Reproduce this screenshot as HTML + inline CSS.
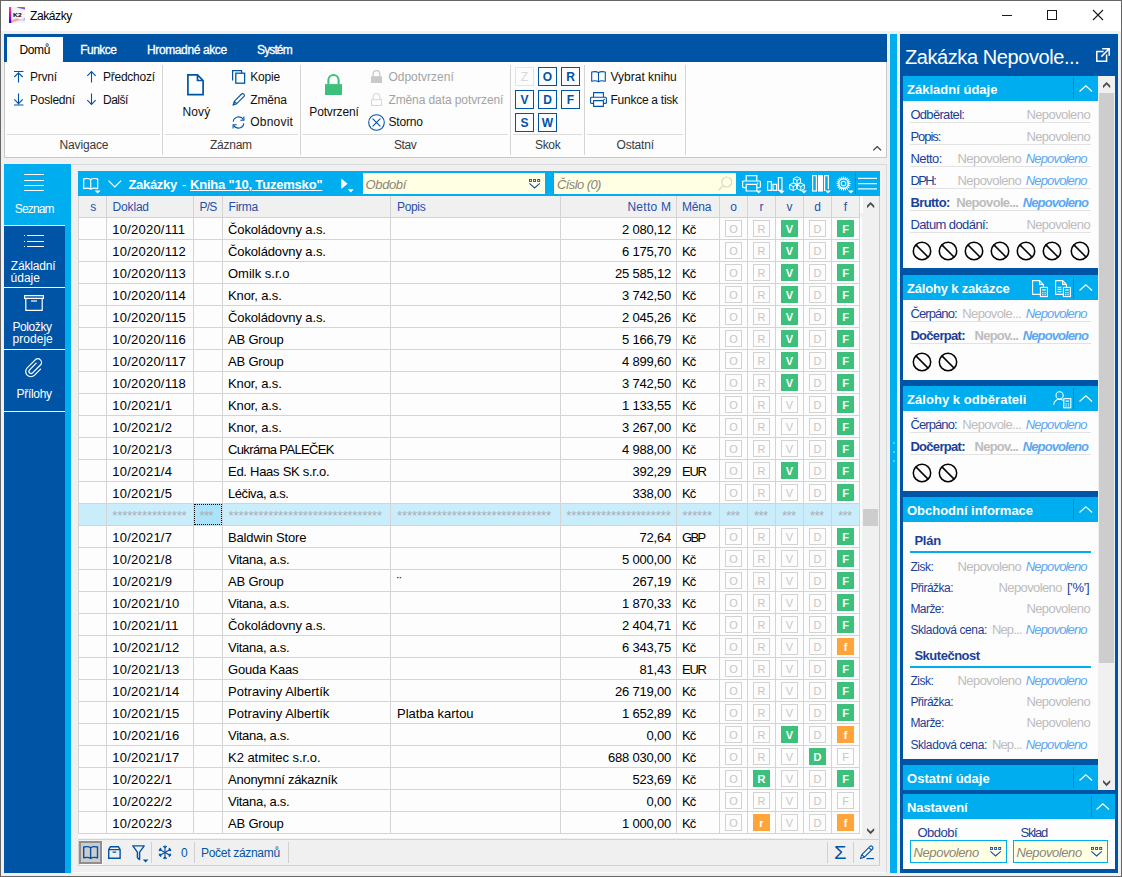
<!DOCTYPE html>
<html lang="cs"><head><meta charset="utf-8"><title>Zakázky</title>
<style>
html,body{margin:0;padding:0;}
body{width:1122px;height:877px;overflow:hidden;background:#f0f0f0;font-family:"Liberation Sans",sans-serif;font-size:12px;position:relative;}
#w{position:absolute;left:0;top:0;width:1122px;height:877px;overflow:hidden;}
#w div, #w svg, #w span.a{position:absolute;white-space:nowrap;box-sizing:border-box;}
svg{overflow:visible}
.b{font-weight:bold}
.i{font-style:italic}
</style></head><body><div id="w">
<!-- titlebar -->
<div style="left:0px;top:0px;width:1122px;height:877px;border:1px solid #666;"></div>
<div style="left:1px;top:1px;width:1120px;height:30px;background:#fff;"></div>
<svg style="left:9px;top:7px" width="16" height="16" viewBox="0 0 16 16"><defs><linearGradient id="kg" x1="0" y1="0" x2="0" y2="1"><stop offset="0" stop-color="#f2505a"/><stop offset="0.5" stop-color="#d400d0"/><stop offset="1" stop-color="#2a00e6"/></linearGradient><linearGradient id="kb" x1="0" y1="0" x2="1" y2="0"><stop offset="0" stop-color="#ff9a6a"/><stop offset="0.45" stop-color="#f986b0"/><stop offset="0.8" stop-color="#e6d0f4"/><stop offset="1" stop-color="#b58af0"/></linearGradient></defs><rect x="0" y="0" width="16" height="16" fill="#f3f3f8"/><path d="M7.5 0.2C10 -0.2 13.5 0 16 0.2V2.6C13.5 1.4 10 1.6 7.5 0.2Z" fill="#6a4af2" opacity="0.9"/><path d="M2 16V13.6C5 13 7 11 9 11.8C11 12.6 13 13.4 16 10.6V13C13 14.6 11 13.4 9 13.6C6 14 5 15.4 2 16Z" fill="url(#kb)" opacity="0.85"/><rect x="0" y="0" width="2.2" height="16" fill="url(#kg)"/><text x="8.4" y="10.3" font-size="5.6" font-weight="bold" text-anchor="middle" fill="#000" font-family="Liberation Sans, sans-serif" textLength="8.6" lengthAdjust="spacingAndGlyphs">K2</text></svg>
<div style="top:8px;font-size:12px;line-height:16px;color:#000;letter-spacing:-0.41px;left:30px;">Zakázky</div>
<div style="left:1002px;top:15px;width:10px;height:1px;background:#1a1a1a;"></div>
<div style="left:1047px;top:10px;width:10px;height:10px;border:1px solid #1a1a1a;"></div>
<svg style="left:1093px;top:10px" width="10" height="10" viewBox="0 0 10 10"><path d="M0 0L10 10M10 0L0 10" stroke="#1a1a1a" stroke-width="1.1" fill="none"/></svg>
<!-- ribbon -->
<div style="left:4px;top:34px;width:883px;height:28px;background:#0054a6;"></div>
<div style="left:7px;top:37px;width:56px;height:25px;background:#fdfdfd;"></div>
<div style="top:42px;font-size:12px;line-height:16px;color:#000;letter-spacing:-0.43px;left:19.6px;">Domů</div>
<div style="top:42px;font-size:12px;line-height:16px;color:#fff;letter-spacing:-0.51px;left:80.2px;-webkit-text-stroke:0.3px #fff;">Funkce</div>
<div style="top:42px;font-size:12px;line-height:16px;color:#fff;letter-spacing:-0.38px;left:147px;-webkit-text-stroke:0.3px #fff;">Hromadné akce</div>
<div style="top:42px;font-size:12px;line-height:16px;color:#fff;letter-spacing:-0.87px;left:257px;-webkit-text-stroke:0.3px #fff;">Systém</div>
<div style="left:4px;top:62px;width:883px;height:96px;background:#fdfdfd;border:1px solid #c9c9c9;border-top:none;"></div>
<div style="left:7px;top:134px;width:153px;height:1px;background:#dcdcdc;"></div>
<div style="left:165px;top:134px;width:133px;height:1px;background:#dcdcdc;"></div>
<div style="left:303px;top:134px;width:205px;height:1px;background:#dcdcdc;"></div>
<div style="left:513px;top:134px;width:69px;height:1px;background:#dcdcdc;"></div>
<div style="left:587px;top:134px;width:96px;height:1px;background:#dcdcdc;"></div>
<div style="left:162px;top:65px;width:1px;height:90px;background:#d4d4d4;"></div>
<div style="left:300px;top:65px;width:1px;height:90px;background:#d4d4d4;"></div>
<div style="left:510px;top:65px;width:1px;height:90px;background:#d4d4d4;"></div>
<div style="left:584px;top:65px;width:1px;height:90px;background:#d4d4d4;"></div>
<div style="left:685px;top:65px;width:1px;height:90px;background:#d4d4d4;"></div>
<div style="top:137px;font-size:12px;line-height:16px;color:#3a3a3a;letter-spacing:-0.15px;left:59.5px;">Navigace</div>
<div style="top:137px;font-size:12px;line-height:16px;color:#3a3a3a;letter-spacing:-0.26px;left:210px;">Záznam</div>
<div style="top:137px;font-size:12px;line-height:16px;color:#3a3a3a;letter-spacing:-0.42px;left:394px;">Stav</div>
<div style="top:137px;font-size:12px;line-height:16px;color:#3a3a3a;letter-spacing:-0.34px;left:535px;">Skok</div>
<div style="top:137px;font-size:12px;line-height:16px;color:#3a3a3a;letter-spacing:-0.19px;left:616.5px;">Ostatní</div>
<div style="top:69px;font-size:12px;line-height:16px;color:#111;letter-spacing:-0.24px;left:30px;">První</div>
<div style="top:92px;font-size:12px;line-height:16px;color:#111;letter-spacing:-0.24px;left:30px;">Poslední</div>
<div style="top:69px;font-size:12px;line-height:16px;color:#111;letter-spacing:-0.25px;left:103px;">Předchozí</div>
<div style="top:92px;font-size:12px;line-height:16px;color:#111;letter-spacing:-0.51px;left:103px;">Další</div>
<svg style="left:14px;top:70px" width="10" height="13" viewBox="0 0 10 13"><path d="M0 1.5H9.4M4.5 2.4V12.6M0.3 7L4.5 2.8L8.7 7" stroke="#0054a6" stroke-width="1.1" fill="none"/></svg>
<svg style="left:14px;top:93px" width="10" height="13" viewBox="0 0 10 13"><path d="M0 12H9.4M4.5 0.4V10.8M0.3 6.4L4.5 10.6L8.7 6.4" stroke="#0054a6" stroke-width="1.1" fill="none"/></svg>
<svg style="left:87px;top:70px" width="10" height="13" viewBox="0 0 10 13"><path d="M4.5 1.4V12.6M0.3 5.8L4.5 1.6L8.7 5.8" stroke="#0054a6" stroke-width="1.1" fill="none"/></svg>
<svg style="left:87px;top:93px" width="10" height="13" viewBox="0 0 10 13"><path d="M4.5 0.4V11.4M0.3 7.2L4.5 11.4L8.7 7.2" stroke="#0054a6" stroke-width="1.1" fill="none"/></svg>
<svg style="left:187px;top:74px" width="17" height="22" viewBox="0 0 17 22"><path d="M0.9 0.9H10.5L16.1 6.5V20.6H0.9Z M10.5 0.9V6.5H16.1" stroke="#0054a6" stroke-width="1.7" fill="none" stroke-linejoin="miter"/></svg>
<div style="top:104px;font-size:12px;line-height:16px;color:#111;letter-spacing:0.11px;left:182.5px;">Nový</div>
<div style="top:69px;font-size:12px;line-height:16px;color:#111;letter-spacing:-0.18px;left:250.3px;">Kopie</div>
<div style="top:92px;font-size:12px;line-height:16px;color:#111;letter-spacing:-0.21px;left:250.3px;">Změna</div>
<div style="top:114px;font-size:12px;line-height:16px;color:#111;letter-spacing:0.21px;left:250.3px;">Obnovit</div>
<svg style="left:232px;top:70px" width="13" height="14" viewBox="0 0 13 14"><path d="M0.6 10.4V0.6H9.6V3" stroke="#0054a6" stroke-width="1.2" fill="none"/><rect x="3.8" y="3.2" width="8.8" height="10" stroke="#0054a6" stroke-width="1.3" fill="none"/></svg>
<svg style="left:232px;top:93px" width="13" height="13" viewBox="0 0 13 13"><path d="M1.2 12L2.3 8.3L9.6 1A1.4 1.4 0 0 1 11.6 1L12 1.4A1.4 1.4 0 0 1 12 3.4L4.7 10.7Z M2.3 8.3L4.7 10.7" stroke="#0054a6" stroke-width="1.1" fill="none" stroke-linejoin="round"/><path d="M0.6 12.4L1.6 9.4L3.6 11.4Z" fill="#0054a6"/></svg>
<svg style="left:232px;top:116px" width="13" height="13" viewBox="0 0 13 13"><path d="M1.2 5.6A5.5 5.5 0 0 1 11.4 3.6M11.8 7.4A5.5 5.5 0 0 1 1.6 9.4" stroke="#0054a6" stroke-width="1.1" fill="none"/><path d="M11.9 0.6V4.2H8.3M1.1 12.4V8.8H4.7" stroke="#0054a6" stroke-width="1.1" fill="none"/></svg>
<svg style="left:325px;top:74px" width="17" height="21" viewBox="0 0 17 21"><path d="M3.4000000000000004 10.6V6.1A5.1 5.1 0 0 1 13.6 6.1V10.6" fill="none" stroke="#3dc07b" stroke-width="2"/><rect x="0" y="10.1" width="17" height="10.9" fill="#3dc07b"/></svg>
<div style="top:104px;font-size:12px;line-height:16px;color:#111;letter-spacing:-0.15px;left:309.3px;">Potvrzení</div>
<svg style="left:371px;top:70px" width="11" height="13" viewBox="0 0 11 13"><path d="M2.2 6.7V3.9499999999999997A3.3 3.3 0 0 1 8.8 3.9499999999999997V6.7" fill="none" stroke="#c9c9c9" stroke-width="1.3"/><rect x="0" y="6.2" width="11" height="6.8" fill="#c9c9c9"/></svg>
<svg style="left:371px;top:93px" width="11" height="13" viewBox="0 0 11 13"><path d="M2.2 6.7V3.8499999999999996A3.3 3.3 0 0 1 8.8 3.8499999999999996V6.7" fill="none" stroke="#d6d6d6" stroke-width="1.1"/><rect x="0.5" y="6.7" width="10" height="5.8" fill="none" stroke="#d6d6d6" stroke-width="1"/></svg>
<div style="top:69px;font-size:12px;line-height:16px;color:#a3a3a3;left:388.4px;">Odpotvrzení</div>
<div style="top:92px;font-size:12px;line-height:16px;color:#a3a3a3;letter-spacing:-0.09px;left:388.4px;">Změna data potvrzení</div>
<svg style="left:368px;top:114px" width="17" height="17" viewBox="0 0 17 17"><circle cx="8.5" cy="8.5" r="7.8" stroke="#0054a6" stroke-width="1.1" fill="none"/><path d="M4.6 4.6L12.4 12.4M12.4 4.6L4.6 12.4" stroke="#0054a6" stroke-width="1.1" fill="none"/></svg>
<div style="top:114px;font-size:12px;line-height:16px;color:#111;letter-spacing:-0.17px;left:388.4px;">Storno</div>
<div style="left:515px;top:67px;width:19px;height:19px;border:1px solid #e4e4e4;color:#d9d9d9;font-weight:normal;font-size:12px;line-height:18px;text-align:center;">Z</div>
<div style="left:538px;top:67px;width:19px;height:19px;border:1px solid #0054a6;color:#0054a6;font-weight:bold;font-size:12px;line-height:18px;text-align:center;">O</div>
<div style="left:561px;top:67px;width:19px;height:19px;border:1px solid #0054a6;color:#0054a6;font-weight:bold;font-size:12px;line-height:18px;text-align:center;">R</div>
<div style="left:515px;top:90px;width:19px;height:19px;border:1px solid #0054a6;color:#0054a6;font-weight:bold;font-size:12px;line-height:18px;text-align:center;">V</div>
<div style="left:538px;top:90px;width:19px;height:19px;border:1px solid #0054a6;color:#0054a6;font-weight:bold;font-size:12px;line-height:18px;text-align:center;">D</div>
<div style="left:561px;top:90px;width:19px;height:19px;border:1px solid #0054a6;color:#0054a6;font-weight:bold;font-size:12px;line-height:18px;text-align:center;">F</div>
<div style="left:515px;top:113px;width:19px;height:19px;border:1px solid #0054a6;color:#0054a6;font-weight:bold;font-size:12px;line-height:18px;text-align:center;">S</div>
<div style="left:538px;top:113px;width:19px;height:19px;border:1px solid #0054a6;color:#0054a6;font-weight:bold;font-size:12px;line-height:18px;text-align:center;">W</div>
<svg style="left:591px;top:71px" width="15" height="12" viewBox="0 0 15 12"><path d="M7.5 1.6V10.4M7.5 1.6C6.3 0.7 3 0.5 0.7 1V10.2C3 9.7 6.3 9.9 7.5 10.8C8.7 9.9 12 9.7 14.3 10.2V1C12 0.5 8.7 0.7 7.5 1.6Z" stroke="#0054a6" stroke-width="1.1" fill="none" stroke-linejoin="round"/></svg>
<div style="top:69px;font-size:12px;line-height:16px;color:#111;left:610.5px;">Vybrat knihu</div>
<svg style="left:590px;top:92px" width="17" height="15" viewBox="0 0 17 15"><path d="M3.6 5.2V0.6H13.4V5.2M3.6 11.4H1.6A1 1 0 0 1 0.6 10.4V6.2A1 1 0 0 1 1.6 5.2H15.4A1 1 0 0 1 16.4 6.2V10.4A1 1 0 0 1 15.4 11.4H13.4M3.6 8.6H13.4V14.4H3.6Z" stroke="#0054a6" stroke-width="1.1" fill="none"/><rect x="13.6" y="6.8" width="1.2" height="1.2" fill="#0054a6"/></svg>
<div style="top:92px;font-size:12px;line-height:16px;color:#111;letter-spacing:-0.26px;left:610.5px;">Funkce a tisk</div>
<svg style="left:873px;top:146px" width="9" height="5" viewBox="0 0 9 5"><path d="M0.3 4.4L4.2 0.6L8.1 4.4" stroke="#333" stroke-width="1.1" fill="none"/></svg>
<!-- sidebar -->
<div style="left:4px;top:164px;width:67px;height:709px;background:#00adef;"></div>
<div style="left:4px;top:226px;width:61px;height:647px;background:#0054a6;"></div>
<div style="left:4px;top:225px;width:61px;height:1px;background:#fff;"></div>
<div style="left:4px;top:287px;width:61px;height:1px;background:#fff;"></div>
<div style="left:4px;top:349px;width:61px;height:1px;background:#fff;"></div>
<div style="left:4px;top:411px;width:61px;height:1px;background:#fff;"></div>
<div style="left:24px;top:174px;width:20px;height:1px;background:#fff;"></div>
<div style="left:24px;top:180px;width:20px;height:1px;background:#fff;"></div>
<div style="left:24px;top:185px;width:20px;height:1px;background:#fff;"></div>
<div style="left:24px;top:190px;width:20px;height:1px;background:#fff;"></div>
<div style="top:200.5px;font-size:12px;line-height:16px;color:#fff;letter-spacing:-0.85px;left:14.8px;">Seznam</div>
<div style="left:24px;top:235px;width:1px;height:1px;background:#fff;"></div>
<div style="left:27px;top:235px;width:17px;height:1px;background:#fff;"></div>
<div style="left:24px;top:241px;width:1px;height:1px;background:#fff;"></div>
<div style="left:27px;top:241px;width:17px;height:1px;background:#fff;"></div>
<div style="left:24px;top:246px;width:1px;height:1px;background:#fff;"></div>
<div style="left:27px;top:246px;width:17px;height:1px;background:#fff;"></div>
<div style="top:257.5px;font-size:12px;line-height:16px;color:#fff;letter-spacing:-0.19px;left:10.8px;">Základní</div>
<div style="top:269.5px;font-size:12px;line-height:16px;color:#fff;letter-spacing:-0.01px;left:10.6px;">údaje</div>
<svg style="left:24px;top:295px" width="20" height="16" viewBox="0 0 20 16"><path d="M0.6 0.6H19.4V3.4H0.6Z M1.8 3.4V15.4H18.2V3.4" stroke="#fff" fill="none" stroke-width="1.2"/><rect x="7" y="5.4" width="6" height="1.2" fill="#fff"/></svg>
<div style="top:319px;font-size:12px;line-height:16px;color:#fff;letter-spacing:-0.39px;left:12.4px;">Položky</div>
<div style="top:331px;font-size:12px;line-height:16px;color:#fff;letter-spacing:0.02px;left:12.6px;">prodeje</div>
<svg style="left:25px;top:358px" width="18" height="20" viewBox="0 0 18 20"><path d="M11.2 5.2L4.6 11.8A2 2 0 0 0 7.6 14.8L15.4 7A3.6 3.6 0 0 0 10.2 1.8L2.2 9.8A5.2 5.2 0 0 0 9.6 17.2L15.6 11.2" stroke="#fff" fill="none" stroke-width="1.2" stroke-linecap="round"/></svg>
<div style="top:386.3px;font-size:12px;line-height:16px;color:#fff;letter-spacing:-0.32px;left:16.6px;">Přílohy</div>
<!-- table -->
<div style="left:71px;top:164px;width:816px;height:709px;border:1px solid #dadada;border-left-color:#fbf6f2;border-bottom-color:#fafafa;"></div>
<div style="left:879px;top:196px;width:1px;height:670px;background:#cbcbcb;"></div>
<div style="left:78px;top:171px;width:802px;height:25px;background:#00adef;"></div>
<svg style="left:83px;top:178px" width="18" height="16" viewBox="0 0 18 16"><path d="M7.7 1.5V11M7.7 1.5C6.4 0.6 3 0.4 0.7 0.9V10.6C3 10.1 6.4 10.3 7.7 11.2C9 10.3 12.4 10.1 14.7 10.6V0.9C12.4 0.4 9 0.6 7.7 1.5Z" stroke="#fff" fill="none" stroke-width="1.2" stroke-linejoin="round"/><path d="M11.6 12.6H17.6L14.6 15.6Z" fill="#fff"/></svg>
<svg style="left:108px;top:180px" width="14" height="8" viewBox="0 0 14 8"><path d="M0.5 0.6L6.8 6.9L13.1 0.6" stroke="#fff" fill="none" stroke-width="1.2"/></svg>
<div style="top:175.5px;font-size:13px;line-height:17px;color:#fff;letter-spacing:-0.33px;font-weight:bold;left:128.5px;">Zakázky</div>
<div style="top:175.5px;font-size:13px;line-height:17px;color:#fff;font-weight:bold;left:182px;font-weight:normal;">-</div>
<div style="top:175.5px;font-size:13px;line-height:17px;color:#fff;letter-spacing:-0.2px;font-weight:bold;left:190px;text-decoration:underline;text-underline-offset:1px;">Kniha "10, Tuzemsko"</div>
<svg style="left:341px;top:178px" width="13" height="15" viewBox="0 0 13 15"><path d="M0.3 0.6L6.6 5.8L0.3 11Z" fill="#fff"/><path d="M6.8 11.2H12.8L9.8 14.4Z" fill="#fff"/></svg>
<div style="left:363px;top:173px;width:182px;height:21px;background:#ffffe4;"></div>
<div style="top:175.8px;font-size:13px;line-height:17px;color:#8c8478;letter-spacing:-0.39px;font-style:italic;left:365.6px;">Období</div>
<svg style="left:529px;top:179px" width="12" height="10" viewBox="0 0 12 10"><rect x="0.5" y="0.5" width="2" height="2" fill="none" stroke="#1c4aa0" stroke-width="0.9"/><rect x="4.6" y="0.5" width="2" height="2" fill="none" stroke="#1c4aa0" stroke-width="0.9"/><rect x="8.7" y="0.5" width="2" height="2" fill="none" stroke="#1c4aa0" stroke-width="0.9"/><path d="M0.4 4.4L5.6 9L10.8 4.4" stroke="#1c4aa0" stroke-width="1.1" fill="none"/></svg>
<div style="left:554px;top:173px;width:182px;height:21px;background:#ffffe4;"></div>
<div style="top:175.8px;font-size:13px;line-height:17px;color:#8c8478;letter-spacing:-0.59px;font-style:italic;left:557px;">Číslo (0)</div>
<svg style="left:718px;top:176px" width="15" height="15" viewBox="0 0 15 15"><circle cx="8.8" cy="6" r="5" stroke="#d9d9c4" stroke-width="1.2" fill="none"/><path d="M5.2 9.6L0.8 14" stroke="#d9d9c4" stroke-width="1.2"/></svg>
<svg style="left:742px;top:175px" width="20" height="18" viewBox="0 0 20 18"><path d="M4.2 6V0.6H14.8V6M4.2 12.6H1.6A1 1 0 0 1 0.6 11.6V7A1 1 0 0 1 1.6 6H17.4A1 1 0 0 1 18.4 7V11.6A1 1 0 0 1 17.4 12.6H14.8M4.2 9.4H14.8V16H4.2Z" stroke="#fff" fill="none" stroke-width="1.2"/><rect x="15" y="7.6" width="1.2" height="1.2" fill="#fff"/><path d="M13.6 15.4H19.6L16.6 18.4Z" fill="#fff"/></svg>
<svg style="left:767px;top:176px" width="18" height="17" viewBox="0 0 18 17"><path d="M0.6 5.6H4.4V14.4H0.6ZM6 8.4H9.6V14.4H6ZM11.4 1.6H15V14.4H11.4Z" stroke="#fff" fill="none" stroke-width="1.2"/><path d="M11.6 14.8H17.6L14.6 17.8Z" fill="#fff"/></svg>
<svg style="left:789px;top:176px" width="18" height="17" viewBox="0 0 18 17"><path d="M8 0.8L11.6 2.6V6.6L8 8.4L4.4 6.6V2.6ZM4.4 2.6L8 4.4L11.6 2.6M8 4.4V8.4M4.2 7L7.8 8.8V12.8L4.2 14.6L0.6 12.8V8.8ZM0.6 8.8L4.2 10.6L7.8 8.8M4.2 10.6V14.6M11.8 7L15.4 8.8V12.8L11.8 14.6L8.2 12.8V8.8ZM8.2 8.8L11.8 10.6L15.4 8.8M11.8 10.6V14.6" stroke="#fff" fill="none" stroke-width="1"/><path d="M12 14.6H18L15 17.6Z" fill="#fff"/></svg>
<svg style="left:812px;top:175px" width="19" height="18" viewBox="0 0 19 18"><rect x="0.6" y="0.6" width="3.8" height="15.4" stroke="#fff" fill="none" stroke-width="1.2"/><rect x="6" y="0" width="5" height="16.6" fill="#fff"/><path d="M12.6 16V0.6H16.4V14" stroke="#fff" fill="none" stroke-width="1.2"/><path d="M13 15.6H19L16 18.6Z" fill="#fff"/></svg>
<svg style="left:836px;top:176px" width="18" height="18" viewBox="0 0 18 18"><circle cx="7.5" cy="7.6" r="4.7" stroke="#fff" fill="none" stroke-width="1.4"/><circle cx="7.5" cy="7.6" r="2.3" stroke="#fff" fill="none" stroke-width="1.1"/><path d="M7.5 0.5V2.8" stroke="#fff" stroke-width="1" transform="rotate(0 7.5 7.6)"/><path d="M7.5 0.5V2.8" stroke="#fff" stroke-width="1" transform="rotate(18 7.5 7.6)"/><path d="M7.5 0.5V2.8" stroke="#fff" stroke-width="1" transform="rotate(36 7.5 7.6)"/><path d="M7.5 0.5V2.8" stroke="#fff" stroke-width="1" transform="rotate(54 7.5 7.6)"/><path d="M7.5 0.5V2.8" stroke="#fff" stroke-width="1" transform="rotate(72 7.5 7.6)"/><path d="M7.5 0.5V2.8" stroke="#fff" stroke-width="1" transform="rotate(90 7.5 7.6)"/><path d="M7.5 0.5V2.8" stroke="#fff" stroke-width="1" transform="rotate(108 7.5 7.6)"/><path d="M7.5 0.5V2.8" stroke="#fff" stroke-width="1" transform="rotate(126 7.5 7.6)"/><path d="M7.5 0.5V2.8" stroke="#fff" stroke-width="1" transform="rotate(144 7.5 7.6)"/><path d="M7.5 0.5V2.8" stroke="#fff" stroke-width="1" transform="rotate(162 7.5 7.6)"/><path d="M7.5 0.5V2.8" stroke="#fff" stroke-width="1" transform="rotate(180 7.5 7.6)"/><path d="M7.5 0.5V2.8" stroke="#fff" stroke-width="1" transform="rotate(198 7.5 7.6)"/><path d="M7.5 0.5V2.8" stroke="#fff" stroke-width="1" transform="rotate(216 7.5 7.6)"/><path d="M7.5 0.5V2.8" stroke="#fff" stroke-width="1" transform="rotate(234 7.5 7.6)"/><path d="M7.5 0.5V2.8" stroke="#fff" stroke-width="1" transform="rotate(252 7.5 7.6)"/><path d="M7.5 0.5V2.8" stroke="#fff" stroke-width="1" transform="rotate(270 7.5 7.6)"/><path d="M7.5 0.5V2.8" stroke="#fff" stroke-width="1" transform="rotate(288 7.5 7.6)"/><path d="M7.5 0.5V2.8" stroke="#fff" stroke-width="1" transform="rotate(306 7.5 7.6)"/><path d="M7.5 0.5V2.8" stroke="#fff" stroke-width="1" transform="rotate(324 7.5 7.6)"/><path d="M7.5 0.5V2.8" stroke="#fff" stroke-width="1" transform="rotate(342 7.5 7.6)"/><path d="M11.8 14.6H17.8L14.8 17.6Z" fill="#fff"/></svg>
<div style="left:855px;top:173px;width:1px;height:21px;background:#0088cf;"></div>
<svg style="left:858px;top:176px" width="19" height="15" viewBox="0 0 19 15"><path d="M0 2.4H19M0 7.6H19M0 12.9H19" stroke="#fff" stroke-width="1.25" opacity="0.92"/></svg>
<div style="left:78px;top:196px;width:782px;height:21px;background:#f0f0f0;"></div>
<div style="left:78px;top:217px;width:785px;height:621px;background:#fdfdfd;"></div>
<div style="left:862px;top:196px;width:17px;height:642px;background:#f0f0f0;"></div>
<div style="left:860px;top:196px;width:3px;height:17px;background:#fdfdfd;"></div>
<div style="left:78px;top:504px;width:782px;height:21px;background:#c9edfb;"></div>
<div style="left:194px;top:504px;width:28px;height:21px;background:#abe3fa;border:1px dotted #000;"></div>
<div style="left:78px;top:217px;width:782px;height:1px;background:#d4d4d4;"></div>
<div style="left:78px;top:239px;width:782px;height:1px;background:#d4d4d4;"></div>
<div style="left:78px;top:261px;width:782px;height:1px;background:#d4d4d4;"></div>
<div style="left:78px;top:283px;width:782px;height:1px;background:#d4d4d4;"></div>
<div style="left:78px;top:305px;width:782px;height:1px;background:#d4d4d4;"></div>
<div style="left:78px;top:327px;width:782px;height:1px;background:#d4d4d4;"></div>
<div style="left:78px;top:349px;width:782px;height:1px;background:#d4d4d4;"></div>
<div style="left:78px;top:371px;width:782px;height:1px;background:#d4d4d4;"></div>
<div style="left:78px;top:393px;width:782px;height:1px;background:#d4d4d4;"></div>
<div style="left:78px;top:415px;width:782px;height:1px;background:#d4d4d4;"></div>
<div style="left:78px;top:437px;width:782px;height:1px;background:#d4d4d4;"></div>
<div style="left:78px;top:459px;width:782px;height:1px;background:#d4d4d4;"></div>
<div style="left:78px;top:481px;width:782px;height:1px;background:#d4d4d4;"></div>
<div style="left:78px;top:503px;width:782px;height:1px;background:#d4d4d4;"></div>
<div style="left:78px;top:525px;width:782px;height:1px;background:#d4d4d4;"></div>
<div style="left:78px;top:547px;width:782px;height:1px;background:#d4d4d4;"></div>
<div style="left:78px;top:569px;width:782px;height:1px;background:#d4d4d4;"></div>
<div style="left:78px;top:591px;width:782px;height:1px;background:#d4d4d4;"></div>
<div style="left:78px;top:613px;width:782px;height:1px;background:#d4d4d4;"></div>
<div style="left:78px;top:635px;width:782px;height:1px;background:#d4d4d4;"></div>
<div style="left:78px;top:657px;width:782px;height:1px;background:#d4d4d4;"></div>
<div style="left:78px;top:679px;width:782px;height:1px;background:#d4d4d4;"></div>
<div style="left:78px;top:701px;width:782px;height:1px;background:#d4d4d4;"></div>
<div style="left:78px;top:723px;width:782px;height:1px;background:#d4d4d4;"></div>
<div style="left:78px;top:745px;width:782px;height:1px;background:#d4d4d4;"></div>
<div style="left:78px;top:767px;width:782px;height:1px;background:#d4d4d4;"></div>
<div style="left:78px;top:789px;width:782px;height:1px;background:#d4d4d4;"></div>
<div style="left:78px;top:811px;width:782px;height:1px;background:#d4d4d4;"></div>
<div style="left:78px;top:833px;width:782px;height:1px;background:#d4d4d4;"></div>
<div style="left:78px;top:196px;width:1px;height:638px;background:#d4d4d4;"></div>
<div style="left:106px;top:196px;width:1px;height:638px;background:#d4d4d4;"></div>
<div style="left:193px;top:196px;width:1px;height:638px;background:#d4d4d4;"></div>
<div style="left:222px;top:196px;width:1px;height:638px;background:#d4d4d4;"></div>
<div style="left:390px;top:196px;width:1px;height:638px;background:#d4d4d4;"></div>
<div style="left:560px;top:196px;width:1px;height:638px;background:#d4d4d4;"></div>
<div style="left:676px;top:196px;width:1px;height:638px;background:#d4d4d4;"></div>
<div style="left:719px;top:196px;width:1px;height:638px;background:#d4d4d4;"></div>
<div style="left:747px;top:196px;width:1px;height:638px;background:#d4d4d4;"></div>
<div style="left:775px;top:196px;width:1px;height:638px;background:#d4d4d4;"></div>
<div style="left:803px;top:196px;width:1px;height:638px;background:#d4d4d4;"></div>
<div style="left:831px;top:196px;width:1px;height:638px;background:#d4d4d4;"></div>
<div style="left:859px;top:196px;width:1px;height:638px;background:#d4d4d4;"></div>
<div style="top:199px;font-size:12px;line-height:16px;color:#2450ac;left:90.3px;">s</div>
<div style="top:199px;font-size:12px;line-height:16px;color:#2450ac;letter-spacing:-0.18px;left:112.6px;">Doklad</div>
<div style="top:199px;font-size:12px;line-height:16px;color:#2450ac;letter-spacing:-0.81px;left:199.6px;">P/S</div>
<div style="top:199px;font-size:12px;line-height:16px;color:#2450ac;letter-spacing:-0.27px;left:228.6px;">Firma</div>
<div style="top:199px;font-size:12px;line-height:16px;color:#2450ac;letter-spacing:-0.34px;left:397px;">Popis</div>
<div style="top:199px;font-size:12px;line-height:16px;color:#2450ac;letter-spacing:0.26px;right:450.74px;">Netto M</div>
<div style="top:199px;font-size:12px;line-height:16px;color:#2450ac;letter-spacing:-0.18px;left:682px;">Měna</div>
<div style="top:199px;font-size:12px;line-height:16px;color:#2450ac;left:730.2px;">o</div>
<div style="top:199px;font-size:12px;line-height:16px;color:#2450ac;left:759.5px;">r</div>
<div style="top:199px;font-size:12px;line-height:16px;color:#2450ac;left:786.5px;">v</div>
<div style="top:199px;font-size:12px;line-height:16px;color:#2450ac;left:814.2px;">d</div>
<div style="top:199px;font-size:12px;line-height:16px;color:#2450ac;left:843.8px;">f</div>
<svg style="left:867px;top:202px" width="8" height="6" viewBox="0 0 8 6"><path d="M3.6 0L7.2 3.6V6.2L3.6 2.6L0 6.2V3.6Z" fill="#4d4d4d"/></svg>
<svg style="left:867px;top:828px" width="8" height="6" viewBox="0 0 8 6"><path d="M3.6 6.2L7.2 2.6V0L3.6 3.6L0 0V2.6Z" fill="#4d4d4d"/></svg>
<div style="left:863px;top:509px;width:15px;height:17px;background:#cdcdcd;"></div>
<div style="top:221px;font-size:13px;line-height:17px;color:#000;left:112.3px;letter-spacing:0.22px;">10/2020/111</div>
<div style="top:221px;font-size:13px;line-height:17px;color:#000;letter-spacing:-0.12px;left:228px;">Čokoládovny a.s.</div>
<div style="top:221px;font-size:13px;line-height:17px;color:#000;right:451px;letter-spacing:-0.2px;">2 080,12</div>
<div style="top:221px;font-size:13px;line-height:17px;color:#000;letter-spacing:-1.04px;left:682px;">Kč</div>
<div style="left:725px;top:220px;width:17px;height:17px;border:1px solid #d2d2d2;color:#c6c6c6;font-size:11px;line-height:17px;text-align:center;">O</div>
<div style="left:753px;top:220px;width:17px;height:17px;border:1px solid #d2d2d2;color:#c6c6c6;font-size:11px;line-height:17px;text-align:center;">R</div>
<div style="left:781px;top:220px;width:17px;height:17px;background:#3dc07b;color:#fff;font-weight:bold;font-size:11px;line-height:18px;text-align:center;">V</div>
<div style="left:809px;top:220px;width:17px;height:17px;border:1px solid #d2d2d2;color:#c6c6c6;font-size:11px;line-height:17px;text-align:center;">D</div>
<div style="left:837px;top:220px;width:17px;height:17px;background:#3dc07b;color:#fff;font-weight:bold;font-size:11px;line-height:18px;text-align:center;">F</div>
<div style="top:243px;font-size:13px;line-height:17px;color:#000;left:112.3px;letter-spacing:0.22px;">10/2020/112</div>
<div style="top:243px;font-size:13px;line-height:17px;color:#000;letter-spacing:-0.12px;left:228px;">Čokoládovny a.s.</div>
<div style="top:243px;font-size:13px;line-height:17px;color:#000;right:451px;letter-spacing:-0.2px;">6 175,70</div>
<div style="top:243px;font-size:13px;line-height:17px;color:#000;letter-spacing:-1.04px;left:682px;">Kč</div>
<div style="left:725px;top:242px;width:17px;height:17px;border:1px solid #d2d2d2;color:#c6c6c6;font-size:11px;line-height:17px;text-align:center;">O</div>
<div style="left:753px;top:242px;width:17px;height:17px;border:1px solid #d2d2d2;color:#c6c6c6;font-size:11px;line-height:17px;text-align:center;">R</div>
<div style="left:781px;top:242px;width:17px;height:17px;background:#3dc07b;color:#fff;font-weight:bold;font-size:11px;line-height:18px;text-align:center;">V</div>
<div style="left:809px;top:242px;width:17px;height:17px;border:1px solid #d2d2d2;color:#c6c6c6;font-size:11px;line-height:17px;text-align:center;">D</div>
<div style="left:837px;top:242px;width:17px;height:17px;background:#3dc07b;color:#fff;font-weight:bold;font-size:11px;line-height:18px;text-align:center;">F</div>
<div style="top:265px;font-size:13px;line-height:17px;color:#000;left:112.3px;letter-spacing:0.22px;">10/2020/113</div>
<div style="top:265px;font-size:13px;line-height:17px;color:#000;left:228px;">Omilk s.r.o</div>
<div style="top:265px;font-size:13px;line-height:17px;color:#000;right:451px;letter-spacing:-0.2px;">25 585,12</div>
<div style="top:265px;font-size:13px;line-height:17px;color:#000;letter-spacing:-1.04px;left:682px;">Kč</div>
<div style="left:725px;top:264px;width:17px;height:17px;border:1px solid #d2d2d2;color:#c6c6c6;font-size:11px;line-height:17px;text-align:center;">O</div>
<div style="left:753px;top:264px;width:17px;height:17px;border:1px solid #d2d2d2;color:#c6c6c6;font-size:11px;line-height:17px;text-align:center;">R</div>
<div style="left:781px;top:264px;width:17px;height:17px;background:#3dc07b;color:#fff;font-weight:bold;font-size:11px;line-height:18px;text-align:center;">V</div>
<div style="left:809px;top:264px;width:17px;height:17px;border:1px solid #d2d2d2;color:#c6c6c6;font-size:11px;line-height:17px;text-align:center;">D</div>
<div style="left:837px;top:264px;width:17px;height:17px;background:#3dc07b;color:#fff;font-weight:bold;font-size:11px;line-height:18px;text-align:center;">F</div>
<div style="top:287px;font-size:13px;line-height:17px;color:#000;left:112.3px;letter-spacing:0.22px;">10/2020/114</div>
<div style="top:287px;font-size:13px;line-height:17px;color:#000;letter-spacing:-0.12px;left:228px;">Knor, a.s.</div>
<div style="top:287px;font-size:13px;line-height:17px;color:#000;right:451px;letter-spacing:-0.2px;">3 742,50</div>
<div style="top:287px;font-size:13px;line-height:17px;color:#000;letter-spacing:-1.04px;left:682px;">Kč</div>
<div style="left:725px;top:286px;width:17px;height:17px;border:1px solid #d2d2d2;color:#c6c6c6;font-size:11px;line-height:17px;text-align:center;">O</div>
<div style="left:753px;top:286px;width:17px;height:17px;border:1px solid #d2d2d2;color:#c6c6c6;font-size:11px;line-height:17px;text-align:center;">R</div>
<div style="left:781px;top:286px;width:17px;height:17px;background:#3dc07b;color:#fff;font-weight:bold;font-size:11px;line-height:18px;text-align:center;">V</div>
<div style="left:809px;top:286px;width:17px;height:17px;border:1px solid #d2d2d2;color:#c6c6c6;font-size:11px;line-height:17px;text-align:center;">D</div>
<div style="left:837px;top:286px;width:17px;height:17px;background:#3dc07b;color:#fff;font-weight:bold;font-size:11px;line-height:18px;text-align:center;">F</div>
<div style="top:309px;font-size:13px;line-height:17px;color:#000;left:112.3px;letter-spacing:0.22px;">10/2020/115</div>
<div style="top:309px;font-size:13px;line-height:17px;color:#000;letter-spacing:-0.12px;left:228px;">Čokoládovny a.s.</div>
<div style="top:309px;font-size:13px;line-height:17px;color:#000;right:451px;letter-spacing:-0.2px;">2 045,26</div>
<div style="top:309px;font-size:13px;line-height:17px;color:#000;letter-spacing:-1.04px;left:682px;">Kč</div>
<div style="left:725px;top:308px;width:17px;height:17px;border:1px solid #d2d2d2;color:#c6c6c6;font-size:11px;line-height:17px;text-align:center;">O</div>
<div style="left:753px;top:308px;width:17px;height:17px;border:1px solid #d2d2d2;color:#c6c6c6;font-size:11px;line-height:17px;text-align:center;">R</div>
<div style="left:781px;top:308px;width:17px;height:17px;background:#3dc07b;color:#fff;font-weight:bold;font-size:11px;line-height:18px;text-align:center;">V</div>
<div style="left:809px;top:308px;width:17px;height:17px;border:1px solid #d2d2d2;color:#c6c6c6;font-size:11px;line-height:17px;text-align:center;">D</div>
<div style="left:837px;top:308px;width:17px;height:17px;background:#3dc07b;color:#fff;font-weight:bold;font-size:11px;line-height:18px;text-align:center;">F</div>
<div style="top:331px;font-size:13px;line-height:17px;color:#000;left:112.3px;letter-spacing:0.22px;">10/2020/116</div>
<div style="top:331px;font-size:13px;line-height:17px;color:#000;letter-spacing:-0.19px;left:228px;">AB Group</div>
<div style="top:331px;font-size:13px;line-height:17px;color:#000;right:451px;letter-spacing:-0.2px;">5 166,79</div>
<div style="top:331px;font-size:13px;line-height:17px;color:#000;letter-spacing:-1.04px;left:682px;">Kč</div>
<div style="left:725px;top:330px;width:17px;height:17px;border:1px solid #d2d2d2;color:#c6c6c6;font-size:11px;line-height:17px;text-align:center;">O</div>
<div style="left:753px;top:330px;width:17px;height:17px;border:1px solid #d2d2d2;color:#c6c6c6;font-size:11px;line-height:17px;text-align:center;">R</div>
<div style="left:781px;top:330px;width:17px;height:17px;background:#3dc07b;color:#fff;font-weight:bold;font-size:11px;line-height:18px;text-align:center;">V</div>
<div style="left:809px;top:330px;width:17px;height:17px;border:1px solid #d2d2d2;color:#c6c6c6;font-size:11px;line-height:17px;text-align:center;">D</div>
<div style="left:837px;top:330px;width:17px;height:17px;background:#3dc07b;color:#fff;font-weight:bold;font-size:11px;line-height:18px;text-align:center;">F</div>
<div style="top:353px;font-size:13px;line-height:17px;color:#000;left:112.3px;letter-spacing:0.22px;">10/2020/117</div>
<div style="top:353px;font-size:13px;line-height:17px;color:#000;letter-spacing:-0.19px;left:228px;">AB Group</div>
<div style="top:353px;font-size:13px;line-height:17px;color:#000;right:451px;letter-spacing:-0.2px;">4 899,60</div>
<div style="top:353px;font-size:13px;line-height:17px;color:#000;letter-spacing:-1.04px;left:682px;">Kč</div>
<div style="left:725px;top:352px;width:17px;height:17px;border:1px solid #d2d2d2;color:#c6c6c6;font-size:11px;line-height:17px;text-align:center;">O</div>
<div style="left:753px;top:352px;width:17px;height:17px;border:1px solid #d2d2d2;color:#c6c6c6;font-size:11px;line-height:17px;text-align:center;">R</div>
<div style="left:781px;top:352px;width:17px;height:17px;background:#3dc07b;color:#fff;font-weight:bold;font-size:11px;line-height:18px;text-align:center;">V</div>
<div style="left:809px;top:352px;width:17px;height:17px;border:1px solid #d2d2d2;color:#c6c6c6;font-size:11px;line-height:17px;text-align:center;">D</div>
<div style="left:837px;top:352px;width:17px;height:17px;background:#3dc07b;color:#fff;font-weight:bold;font-size:11px;line-height:18px;text-align:center;">F</div>
<div style="top:375px;font-size:13px;line-height:17px;color:#000;left:112.3px;letter-spacing:0.22px;">10/2020/118</div>
<div style="top:375px;font-size:13px;line-height:17px;color:#000;letter-spacing:-0.12px;left:228px;">Knor, a.s.</div>
<div style="top:375px;font-size:13px;line-height:17px;color:#000;right:451px;letter-spacing:-0.2px;">3 742,50</div>
<div style="top:375px;font-size:13px;line-height:17px;color:#000;letter-spacing:-1.04px;left:682px;">Kč</div>
<div style="left:725px;top:374px;width:17px;height:17px;border:1px solid #d2d2d2;color:#c6c6c6;font-size:11px;line-height:17px;text-align:center;">O</div>
<div style="left:753px;top:374px;width:17px;height:17px;border:1px solid #d2d2d2;color:#c6c6c6;font-size:11px;line-height:17px;text-align:center;">R</div>
<div style="left:781px;top:374px;width:17px;height:17px;background:#3dc07b;color:#fff;font-weight:bold;font-size:11px;line-height:18px;text-align:center;">V</div>
<div style="left:809px;top:374px;width:17px;height:17px;border:1px solid #d2d2d2;color:#c6c6c6;font-size:11px;line-height:17px;text-align:center;">D</div>
<div style="left:837px;top:374px;width:17px;height:17px;background:#3dc07b;color:#fff;font-weight:bold;font-size:11px;line-height:18px;text-align:center;">F</div>
<div style="top:397px;font-size:13px;line-height:17px;color:#000;left:112.3px;letter-spacing:0.22px;">10/2021/1</div>
<div style="top:397px;font-size:13px;line-height:17px;color:#000;letter-spacing:-0.12px;left:228px;">Knor, a.s.</div>
<div style="top:397px;font-size:13px;line-height:17px;color:#000;right:451px;letter-spacing:-0.2px;">1 133,55</div>
<div style="top:397px;font-size:13px;line-height:17px;color:#000;letter-spacing:-1.04px;left:682px;">Kč</div>
<div style="left:725px;top:396px;width:17px;height:17px;border:1px solid #d2d2d2;color:#c6c6c6;font-size:11px;line-height:17px;text-align:center;">O</div>
<div style="left:753px;top:396px;width:17px;height:17px;border:1px solid #d2d2d2;color:#c6c6c6;font-size:11px;line-height:17px;text-align:center;">R</div>
<div style="left:781px;top:396px;width:17px;height:17px;border:1px solid #d2d2d2;color:#c6c6c6;font-size:11px;line-height:17px;text-align:center;">V</div>
<div style="left:809px;top:396px;width:17px;height:17px;border:1px solid #d2d2d2;color:#c6c6c6;font-size:11px;line-height:17px;text-align:center;">D</div>
<div style="left:837px;top:396px;width:17px;height:17px;background:#3dc07b;color:#fff;font-weight:bold;font-size:11px;line-height:18px;text-align:center;">F</div>
<div style="top:419px;font-size:13px;line-height:17px;color:#000;left:112.3px;letter-spacing:0.22px;">10/2021/2</div>
<div style="top:419px;font-size:13px;line-height:17px;color:#000;letter-spacing:-0.12px;left:228px;">Knor, a.s.</div>
<div style="top:419px;font-size:13px;line-height:17px;color:#000;right:451px;letter-spacing:-0.2px;">3 267,00</div>
<div style="top:419px;font-size:13px;line-height:17px;color:#000;letter-spacing:-1.04px;left:682px;">Kč</div>
<div style="left:725px;top:418px;width:17px;height:17px;border:1px solid #d2d2d2;color:#c6c6c6;font-size:11px;line-height:17px;text-align:center;">O</div>
<div style="left:753px;top:418px;width:17px;height:17px;border:1px solid #d2d2d2;color:#c6c6c6;font-size:11px;line-height:17px;text-align:center;">R</div>
<div style="left:781px;top:418px;width:17px;height:17px;border:1px solid #d2d2d2;color:#c6c6c6;font-size:11px;line-height:17px;text-align:center;">V</div>
<div style="left:809px;top:418px;width:17px;height:17px;border:1px solid #d2d2d2;color:#c6c6c6;font-size:11px;line-height:17px;text-align:center;">D</div>
<div style="left:837px;top:418px;width:17px;height:17px;background:#3dc07b;color:#fff;font-weight:bold;font-size:11px;line-height:18px;text-align:center;">F</div>
<div style="top:441px;font-size:13px;line-height:17px;color:#000;left:112.3px;letter-spacing:0.22px;">10/2021/3</div>
<div style="top:441px;font-size:13px;line-height:17px;color:#000;letter-spacing:-0.64px;left:228px;">Cukrárna PALEČEK</div>
<div style="top:441px;font-size:13px;line-height:17px;color:#000;right:451px;letter-spacing:-0.2px;">4 988,00</div>
<div style="top:441px;font-size:13px;line-height:17px;color:#000;letter-spacing:-1.04px;left:682px;">Kč</div>
<div style="left:725px;top:440px;width:17px;height:17px;border:1px solid #d2d2d2;color:#c6c6c6;font-size:11px;line-height:17px;text-align:center;">O</div>
<div style="left:753px;top:440px;width:17px;height:17px;border:1px solid #d2d2d2;color:#c6c6c6;font-size:11px;line-height:17px;text-align:center;">R</div>
<div style="left:781px;top:440px;width:17px;height:17px;border:1px solid #d2d2d2;color:#c6c6c6;font-size:11px;line-height:17px;text-align:center;">V</div>
<div style="left:809px;top:440px;width:17px;height:17px;border:1px solid #d2d2d2;color:#c6c6c6;font-size:11px;line-height:17px;text-align:center;">D</div>
<div style="left:837px;top:440px;width:17px;height:17px;background:#3dc07b;color:#fff;font-weight:bold;font-size:11px;line-height:18px;text-align:center;">F</div>
<div style="top:463px;font-size:13px;line-height:17px;color:#000;left:112.3px;letter-spacing:0.22px;">10/2021/4</div>
<div style="top:463px;font-size:13px;line-height:17px;color:#000;letter-spacing:-0.27px;left:228px;">Ed. Haas SK s.r.o.</div>
<div style="top:463px;font-size:13px;line-height:17px;color:#000;right:451px;letter-spacing:-0.2px;">392,29</div>
<div style="top:463px;font-size:13px;line-height:17px;color:#000;letter-spacing:-1.25px;left:682px;">EUR</div>
<div style="left:725px;top:462px;width:17px;height:17px;border:1px solid #d2d2d2;color:#c6c6c6;font-size:11px;line-height:17px;text-align:center;">O</div>
<div style="left:753px;top:462px;width:17px;height:17px;border:1px solid #d2d2d2;color:#c6c6c6;font-size:11px;line-height:17px;text-align:center;">R</div>
<div style="left:781px;top:462px;width:17px;height:17px;background:#3dc07b;color:#fff;font-weight:bold;font-size:11px;line-height:18px;text-align:center;">V</div>
<div style="left:809px;top:462px;width:17px;height:17px;border:1px solid #d2d2d2;color:#c6c6c6;font-size:11px;line-height:17px;text-align:center;">D</div>
<div style="left:837px;top:462px;width:17px;height:17px;background:#3dc07b;color:#fff;font-weight:bold;font-size:11px;line-height:18px;text-align:center;">F</div>
<div style="top:485px;font-size:13px;line-height:17px;color:#000;left:112.3px;letter-spacing:0.22px;">10/2021/5</div>
<div style="top:485px;font-size:13px;line-height:17px;color:#000;letter-spacing:-0.44px;left:228px;">Léčiva, a.s.</div>
<div style="top:485px;font-size:13px;line-height:17px;color:#000;right:451px;letter-spacing:-0.2px;">338,00</div>
<div style="top:485px;font-size:13px;line-height:17px;color:#000;letter-spacing:-1.04px;left:682px;">Kč</div>
<div style="left:725px;top:484px;width:17px;height:17px;border:1px solid #d2d2d2;color:#c6c6c6;font-size:11px;line-height:17px;text-align:center;">O</div>
<div style="left:753px;top:484px;width:17px;height:17px;border:1px solid #d2d2d2;color:#c6c6c6;font-size:11px;line-height:17px;text-align:center;">R</div>
<div style="left:781px;top:484px;width:17px;height:17px;border:1px solid #d2d2d2;color:#c6c6c6;font-size:11px;line-height:17px;text-align:center;">V</div>
<div style="left:809px;top:484px;width:17px;height:17px;border:1px solid #d2d2d2;color:#c6c6c6;font-size:11px;line-height:17px;text-align:center;">D</div>
<div style="left:837px;top:484px;width:17px;height:17px;background:#3dc07b;color:#fff;font-weight:bold;font-size:11px;line-height:18px;text-align:center;">F</div>
<div style="top:507px;font-size:13px;line-height:17px;color:#a9adb3;letter-spacing:-0.11px;left:112.3px;">***************</div>
<div style="top:507px;font-size:13px;line-height:17px;color:#a9adb3;letter-spacing:-0.63px;left:199.5px;">***</div>
<div style="top:507px;font-size:13px;line-height:17px;color:#a9adb3;letter-spacing:-0.11px;left:228.6px;">*******************************</div>
<div style="top:507px;font-size:13px;line-height:17px;color:#a9adb3;letter-spacing:-0.09px;left:397px;">*******************************</div>
<div style="top:507px;font-size:13px;line-height:17px;color:#a9adb3;letter-spacing:-0.08px;right:451.28000000000003px;">*********************</div>
<div style="top:507px;font-size:13px;line-height:17px;color:#a9adb3;letter-spacing:-0.13px;left:682.3px;">******</div>
<div style="top:507px;font-size:13px;line-height:17px;color:#a9adb3;letter-spacing:-0.5px;left:726px;">***</div>
<div style="top:507px;font-size:13px;line-height:17px;color:#a9adb3;letter-spacing:-0.5px;left:754px;">***</div>
<div style="top:507px;font-size:13px;line-height:17px;color:#a9adb3;letter-spacing:-0.5px;left:782px;">***</div>
<div style="top:507px;font-size:13px;line-height:17px;color:#a9adb3;letter-spacing:-0.5px;left:810px;">***</div>
<div style="top:507px;font-size:13px;line-height:17px;color:#a9adb3;letter-spacing:-0.5px;left:838px;">***</div>
<div style="top:529px;font-size:13px;line-height:17px;color:#000;left:112.3px;letter-spacing:0.22px;">10/2021/7</div>
<div style="top:529px;font-size:13px;line-height:17px;color:#000;letter-spacing:-0.15px;left:228px;">Baldwin Store</div>
<div style="top:529px;font-size:13px;line-height:17px;color:#000;right:451px;letter-spacing:-0.2px;">72,64</div>
<div style="top:529px;font-size:13px;line-height:17px;color:#000;letter-spacing:-1.65px;left:682px;">GBP</div>
<div style="left:725px;top:528px;width:17px;height:17px;border:1px solid #d2d2d2;color:#c6c6c6;font-size:11px;line-height:17px;text-align:center;">O</div>
<div style="left:753px;top:528px;width:17px;height:17px;border:1px solid #d2d2d2;color:#c6c6c6;font-size:11px;line-height:17px;text-align:center;">R</div>
<div style="left:781px;top:528px;width:17px;height:17px;border:1px solid #d2d2d2;color:#c6c6c6;font-size:11px;line-height:17px;text-align:center;">V</div>
<div style="left:809px;top:528px;width:17px;height:17px;border:1px solid #d2d2d2;color:#c6c6c6;font-size:11px;line-height:17px;text-align:center;">D</div>
<div style="left:837px;top:528px;width:17px;height:17px;background:#3dc07b;color:#fff;font-weight:bold;font-size:11px;line-height:18px;text-align:center;">F</div>
<div style="top:551px;font-size:13px;line-height:17px;color:#000;left:112.3px;letter-spacing:0.22px;">10/2021/8</div>
<div style="top:551px;font-size:13px;line-height:17px;color:#000;letter-spacing:-0.29px;left:228px;">Vitana, a.s.</div>
<div style="top:551px;font-size:13px;line-height:17px;color:#000;right:451px;letter-spacing:-0.2px;">5 000,00</div>
<div style="top:551px;font-size:13px;line-height:17px;color:#000;letter-spacing:-1.04px;left:682px;">Kč</div>
<div style="left:725px;top:550px;width:17px;height:17px;border:1px solid #d2d2d2;color:#c6c6c6;font-size:11px;line-height:17px;text-align:center;">O</div>
<div style="left:753px;top:550px;width:17px;height:17px;border:1px solid #d2d2d2;color:#c6c6c6;font-size:11px;line-height:17px;text-align:center;">R</div>
<div style="left:781px;top:550px;width:17px;height:17px;border:1px solid #d2d2d2;color:#c6c6c6;font-size:11px;line-height:17px;text-align:center;">V</div>
<div style="left:809px;top:550px;width:17px;height:17px;border:1px solid #d2d2d2;color:#c6c6c6;font-size:11px;line-height:17px;text-align:center;">D</div>
<div style="left:837px;top:550px;width:17px;height:17px;background:#3dc07b;color:#fff;font-weight:bold;font-size:11px;line-height:18px;text-align:center;">F</div>
<div style="top:573px;font-size:13px;line-height:17px;color:#000;left:112.3px;letter-spacing:0.22px;">10/2021/9</div>
<div style="top:573px;font-size:13px;line-height:17px;color:#000;letter-spacing:-0.19px;left:228px;">AB Group</div>
<div style="top:573px;font-size:13px;line-height:17px;color:#000;left:397px;">¨</div>
<div style="top:573px;font-size:13px;line-height:17px;color:#000;right:451px;letter-spacing:-0.2px;">267,19</div>
<div style="top:573px;font-size:13px;line-height:17px;color:#000;letter-spacing:-1.04px;left:682px;">Kč</div>
<div style="left:725px;top:572px;width:17px;height:17px;border:1px solid #d2d2d2;color:#c6c6c6;font-size:11px;line-height:17px;text-align:center;">O</div>
<div style="left:753px;top:572px;width:17px;height:17px;border:1px solid #d2d2d2;color:#c6c6c6;font-size:11px;line-height:17px;text-align:center;">R</div>
<div style="left:781px;top:572px;width:17px;height:17px;border:1px solid #d2d2d2;color:#c6c6c6;font-size:11px;line-height:17px;text-align:center;">V</div>
<div style="left:809px;top:572px;width:17px;height:17px;border:1px solid #d2d2d2;color:#c6c6c6;font-size:11px;line-height:17px;text-align:center;">D</div>
<div style="left:837px;top:572px;width:17px;height:17px;background:#3dc07b;color:#fff;font-weight:bold;font-size:11px;line-height:18px;text-align:center;">F</div>
<div style="top:595px;font-size:13px;line-height:17px;color:#000;left:112.3px;letter-spacing:0.22px;">10/2021/10</div>
<div style="top:595px;font-size:13px;line-height:17px;color:#000;letter-spacing:-0.29px;left:228px;">Vitana, a.s.</div>
<div style="top:595px;font-size:13px;line-height:17px;color:#000;right:451px;letter-spacing:-0.2px;">1 870,33</div>
<div style="top:595px;font-size:13px;line-height:17px;color:#000;letter-spacing:-1.04px;left:682px;">Kč</div>
<div style="left:725px;top:594px;width:17px;height:17px;border:1px solid #d2d2d2;color:#c6c6c6;font-size:11px;line-height:17px;text-align:center;">O</div>
<div style="left:753px;top:594px;width:17px;height:17px;border:1px solid #d2d2d2;color:#c6c6c6;font-size:11px;line-height:17px;text-align:center;">R</div>
<div style="left:781px;top:594px;width:17px;height:17px;border:1px solid #d2d2d2;color:#c6c6c6;font-size:11px;line-height:17px;text-align:center;">V</div>
<div style="left:809px;top:594px;width:17px;height:17px;border:1px solid #d2d2d2;color:#c6c6c6;font-size:11px;line-height:17px;text-align:center;">D</div>
<div style="left:837px;top:594px;width:17px;height:17px;background:#3dc07b;color:#fff;font-weight:bold;font-size:11px;line-height:18px;text-align:center;">F</div>
<div style="top:617px;font-size:13px;line-height:17px;color:#000;left:112.3px;letter-spacing:0.22px;">10/2021/11</div>
<div style="top:617px;font-size:13px;line-height:17px;color:#000;letter-spacing:-0.12px;left:228px;">Čokoládovny a.s.</div>
<div style="top:617px;font-size:13px;line-height:17px;color:#000;right:451px;letter-spacing:-0.2px;">2 404,71</div>
<div style="top:617px;font-size:13px;line-height:17px;color:#000;letter-spacing:-1.04px;left:682px;">Kč</div>
<div style="left:725px;top:616px;width:17px;height:17px;border:1px solid #d2d2d2;color:#c6c6c6;font-size:11px;line-height:17px;text-align:center;">O</div>
<div style="left:753px;top:616px;width:17px;height:17px;border:1px solid #d2d2d2;color:#c6c6c6;font-size:11px;line-height:17px;text-align:center;">R</div>
<div style="left:781px;top:616px;width:17px;height:17px;border:1px solid #d2d2d2;color:#c6c6c6;font-size:11px;line-height:17px;text-align:center;">V</div>
<div style="left:809px;top:616px;width:17px;height:17px;border:1px solid #d2d2d2;color:#c6c6c6;font-size:11px;line-height:17px;text-align:center;">D</div>
<div style="left:837px;top:616px;width:17px;height:17px;background:#3dc07b;color:#fff;font-weight:bold;font-size:11px;line-height:18px;text-align:center;">F</div>
<div style="top:639px;font-size:13px;line-height:17px;color:#000;left:112.3px;letter-spacing:0.22px;">10/2021/12</div>
<div style="top:639px;font-size:13px;line-height:17px;color:#000;letter-spacing:-0.29px;left:228px;">Vitana, a.s.</div>
<div style="top:639px;font-size:13px;line-height:17px;color:#000;right:451px;letter-spacing:-0.2px;">6 343,75</div>
<div style="top:639px;font-size:13px;line-height:17px;color:#000;letter-spacing:-1.04px;left:682px;">Kč</div>
<div style="left:725px;top:638px;width:17px;height:17px;border:1px solid #d2d2d2;color:#c6c6c6;font-size:11px;line-height:17px;text-align:center;">O</div>
<div style="left:753px;top:638px;width:17px;height:17px;border:1px solid #d2d2d2;color:#c6c6c6;font-size:11px;line-height:17px;text-align:center;">R</div>
<div style="left:781px;top:638px;width:17px;height:17px;border:1px solid #d2d2d2;color:#c6c6c6;font-size:11px;line-height:17px;text-align:center;">V</div>
<div style="left:809px;top:638px;width:17px;height:17px;border:1px solid #d2d2d2;color:#c6c6c6;font-size:11px;line-height:17px;text-align:center;">D</div>
<div style="left:837px;top:638px;width:17px;height:17px;background:#ffa43a;color:#fff;font-weight:bold;font-size:11px;line-height:18px;text-align:center;">f</div>
<div style="top:661px;font-size:13px;line-height:17px;color:#000;left:112.3px;letter-spacing:0.22px;">10/2021/13</div>
<div style="top:661px;font-size:13px;line-height:17px;color:#000;letter-spacing:-0.2px;left:228px;">Gouda Kaas</div>
<div style="top:661px;font-size:13px;line-height:17px;color:#000;right:451px;letter-spacing:-0.2px;">81,43</div>
<div style="top:661px;font-size:13px;line-height:17px;color:#000;letter-spacing:-1.25px;left:682px;">EUR</div>
<div style="left:725px;top:660px;width:17px;height:17px;border:1px solid #d2d2d2;color:#c6c6c6;font-size:11px;line-height:17px;text-align:center;">O</div>
<div style="left:753px;top:660px;width:17px;height:17px;border:1px solid #d2d2d2;color:#c6c6c6;font-size:11px;line-height:17px;text-align:center;">R</div>
<div style="left:781px;top:660px;width:17px;height:17px;border:1px solid #d2d2d2;color:#c6c6c6;font-size:11px;line-height:17px;text-align:center;">V</div>
<div style="left:809px;top:660px;width:17px;height:17px;border:1px solid #d2d2d2;color:#c6c6c6;font-size:11px;line-height:17px;text-align:center;">D</div>
<div style="left:837px;top:660px;width:17px;height:17px;background:#3dc07b;color:#fff;font-weight:bold;font-size:11px;line-height:18px;text-align:center;">F</div>
<div style="top:683px;font-size:13px;line-height:17px;color:#000;left:112.3px;letter-spacing:0.22px;">10/2021/14</div>
<div style="top:683px;font-size:13px;line-height:17px;color:#000;letter-spacing:0.01px;left:228px;">Potraviny Albertík</div>
<div style="top:683px;font-size:13px;line-height:17px;color:#000;right:451px;letter-spacing:-0.2px;">26 719,00</div>
<div style="top:683px;font-size:13px;line-height:17px;color:#000;letter-spacing:-1.04px;left:682px;">Kč</div>
<div style="left:725px;top:682px;width:17px;height:17px;border:1px solid #d2d2d2;color:#c6c6c6;font-size:11px;line-height:17px;text-align:center;">O</div>
<div style="left:753px;top:682px;width:17px;height:17px;border:1px solid #d2d2d2;color:#c6c6c6;font-size:11px;line-height:17px;text-align:center;">R</div>
<div style="left:781px;top:682px;width:17px;height:17px;border:1px solid #d2d2d2;color:#c6c6c6;font-size:11px;line-height:17px;text-align:center;">V</div>
<div style="left:809px;top:682px;width:17px;height:17px;border:1px solid #d2d2d2;color:#c6c6c6;font-size:11px;line-height:17px;text-align:center;">D</div>
<div style="left:837px;top:682px;width:17px;height:17px;background:#3dc07b;color:#fff;font-weight:bold;font-size:11px;line-height:18px;text-align:center;">F</div>
<div style="top:705px;font-size:13px;line-height:17px;color:#000;left:112.3px;letter-spacing:0.22px;">10/2021/15</div>
<div style="top:705px;font-size:13px;line-height:17px;color:#000;letter-spacing:0.01px;left:228px;">Potraviny Albertík</div>
<div style="top:705px;font-size:13px;line-height:17px;color:#000;left:397px;">Platba kartou</div>
<div style="top:705px;font-size:13px;line-height:17px;color:#000;right:451px;letter-spacing:-0.2px;">1 652,89</div>
<div style="top:705px;font-size:13px;line-height:17px;color:#000;letter-spacing:-1.04px;left:682px;">Kč</div>
<div style="left:725px;top:704px;width:17px;height:17px;border:1px solid #d2d2d2;color:#c6c6c6;font-size:11px;line-height:17px;text-align:center;">O</div>
<div style="left:753px;top:704px;width:17px;height:17px;border:1px solid #d2d2d2;color:#c6c6c6;font-size:11px;line-height:17px;text-align:center;">R</div>
<div style="left:781px;top:704px;width:17px;height:17px;border:1px solid #d2d2d2;color:#c6c6c6;font-size:11px;line-height:17px;text-align:center;">V</div>
<div style="left:809px;top:704px;width:17px;height:17px;border:1px solid #d2d2d2;color:#c6c6c6;font-size:11px;line-height:17px;text-align:center;">D</div>
<div style="left:837px;top:704px;width:17px;height:17px;background:#3dc07b;color:#fff;font-weight:bold;font-size:11px;line-height:18px;text-align:center;">F</div>
<div style="top:727px;font-size:13px;line-height:17px;color:#000;left:112.3px;letter-spacing:0.22px;">10/2021/16</div>
<div style="top:727px;font-size:13px;line-height:17px;color:#000;letter-spacing:-0.29px;left:228px;">Vitana, a.s.</div>
<div style="top:727px;font-size:13px;line-height:17px;color:#000;right:451px;letter-spacing:-0.2px;">0,00</div>
<div style="top:727px;font-size:13px;line-height:17px;color:#000;letter-spacing:-1.04px;left:682px;">Kč</div>
<div style="left:725px;top:726px;width:17px;height:17px;border:1px solid #d2d2d2;color:#c6c6c6;font-size:11px;line-height:17px;text-align:center;">O</div>
<div style="left:753px;top:726px;width:17px;height:17px;border:1px solid #d2d2d2;color:#c6c6c6;font-size:11px;line-height:17px;text-align:center;">R</div>
<div style="left:781px;top:726px;width:17px;height:17px;background:#3dc07b;color:#fff;font-weight:bold;font-size:11px;line-height:18px;text-align:center;">V</div>
<div style="left:809px;top:726px;width:17px;height:17px;border:1px solid #d2d2d2;color:#c6c6c6;font-size:11px;line-height:17px;text-align:center;">D</div>
<div style="left:837px;top:726px;width:17px;height:17px;background:#ffa43a;color:#fff;font-weight:bold;font-size:11px;line-height:18px;text-align:center;">f</div>
<div style="top:749px;font-size:13px;line-height:17px;color:#000;left:112.3px;letter-spacing:0.22px;">10/2021/17</div>
<div style="top:749px;font-size:13px;line-height:17px;color:#000;letter-spacing:-0.04px;left:228px;">K2 atmitec s.r.o.</div>
<div style="top:749px;font-size:13px;line-height:17px;color:#000;right:451px;letter-spacing:-0.2px;">688 030,00</div>
<div style="top:749px;font-size:13px;line-height:17px;color:#000;letter-spacing:-1.04px;left:682px;">Kč</div>
<div style="left:725px;top:748px;width:17px;height:17px;border:1px solid #d2d2d2;color:#c6c6c6;font-size:11px;line-height:17px;text-align:center;">O</div>
<div style="left:753px;top:748px;width:17px;height:17px;border:1px solid #d2d2d2;color:#c6c6c6;font-size:11px;line-height:17px;text-align:center;">R</div>
<div style="left:781px;top:748px;width:17px;height:17px;border:1px solid #d2d2d2;color:#c6c6c6;font-size:11px;line-height:17px;text-align:center;">V</div>
<div style="left:809px;top:748px;width:17px;height:17px;background:#3dc07b;color:#fff;font-weight:bold;font-size:11px;line-height:18px;text-align:center;">D</div>
<div style="left:837px;top:748px;width:17px;height:17px;border:1px solid #d2d2d2;color:#c6c6c6;font-size:11px;line-height:17px;text-align:center;">F</div>
<div style="top:771px;font-size:13px;line-height:17px;color:#000;left:112.3px;letter-spacing:0.22px;">10/2022/1</div>
<div style="top:771px;font-size:13px;line-height:17px;color:#000;letter-spacing:-0.25px;left:228px;">Anonymní zákazník</div>
<div style="top:771px;font-size:13px;line-height:17px;color:#000;right:451px;letter-spacing:-0.2px;">523,69</div>
<div style="top:771px;font-size:13px;line-height:17px;color:#000;letter-spacing:-1.04px;left:682px;">Kč</div>
<div style="left:725px;top:770px;width:17px;height:17px;border:1px solid #d2d2d2;color:#c6c6c6;font-size:11px;line-height:17px;text-align:center;">O</div>
<div style="left:753px;top:770px;width:17px;height:17px;background:#3dc07b;color:#fff;font-weight:bold;font-size:11px;line-height:18px;text-align:center;">R</div>
<div style="left:781px;top:770px;width:17px;height:17px;border:1px solid #d2d2d2;color:#c6c6c6;font-size:11px;line-height:17px;text-align:center;">V</div>
<div style="left:809px;top:770px;width:17px;height:17px;border:1px solid #d2d2d2;color:#c6c6c6;font-size:11px;line-height:17px;text-align:center;">D</div>
<div style="left:837px;top:770px;width:17px;height:17px;background:#3dc07b;color:#fff;font-weight:bold;font-size:11px;line-height:18px;text-align:center;">F</div>
<div style="top:793px;font-size:13px;line-height:17px;color:#000;left:112.3px;letter-spacing:0.22px;">10/2022/2</div>
<div style="top:793px;font-size:13px;line-height:17px;color:#000;letter-spacing:-0.29px;left:228px;">Vitana, a.s.</div>
<div style="top:793px;font-size:13px;line-height:17px;color:#000;right:451px;letter-spacing:-0.2px;">0,00</div>
<div style="top:793px;font-size:13px;line-height:17px;color:#000;letter-spacing:-1.04px;left:682px;">Kč</div>
<div style="left:725px;top:792px;width:17px;height:17px;border:1px solid #d2d2d2;color:#c6c6c6;font-size:11px;line-height:17px;text-align:center;">O</div>
<div style="left:753px;top:792px;width:17px;height:17px;border:1px solid #d2d2d2;color:#c6c6c6;font-size:11px;line-height:17px;text-align:center;">R</div>
<div style="left:781px;top:792px;width:17px;height:17px;border:1px solid #d2d2d2;color:#c6c6c6;font-size:11px;line-height:17px;text-align:center;">V</div>
<div style="left:809px;top:792px;width:17px;height:17px;border:1px solid #d2d2d2;color:#c6c6c6;font-size:11px;line-height:17px;text-align:center;">D</div>
<div style="left:837px;top:792px;width:17px;height:17px;border:1px solid #d2d2d2;color:#c6c6c6;font-size:11px;line-height:17px;text-align:center;">F</div>
<div style="top:815px;font-size:13px;line-height:17px;color:#000;left:112.3px;letter-spacing:0.22px;">10/2022/3</div>
<div style="top:815px;font-size:13px;line-height:17px;color:#000;letter-spacing:-0.19px;left:228px;">AB Group</div>
<div style="top:815px;font-size:13px;line-height:17px;color:#000;right:451px;letter-spacing:-0.2px;">1 000,00</div>
<div style="top:815px;font-size:13px;line-height:17px;color:#000;letter-spacing:-1.04px;left:682px;">Kč</div>
<div style="left:725px;top:814px;width:17px;height:17px;border:1px solid #d2d2d2;color:#c6c6c6;font-size:11px;line-height:17px;text-align:center;">O</div>
<div style="left:753px;top:814px;width:17px;height:17px;background:#ffa43a;color:#fff;font-weight:bold;font-size:11px;line-height:18px;text-align:center;">r</div>
<div style="left:781px;top:814px;width:17px;height:17px;border:1px solid #d2d2d2;color:#c6c6c6;font-size:11px;line-height:17px;text-align:center;">V</div>
<div style="left:809px;top:814px;width:17px;height:17px;border:1px solid #d2d2d2;color:#c6c6c6;font-size:11px;line-height:17px;text-align:center;">D</div>
<div style="left:837px;top:814px;width:17px;height:17px;background:#ffa43a;color:#fff;font-weight:bold;font-size:11px;line-height:18px;text-align:center;">f</div>
<div style="left:78px;top:839px;width:802px;height:1px;background:#d2d2d2;"></div>
<div style="left:78px;top:865px;width:802px;height:1px;background:#d2d2d2;"></div>
<div style="left:78px;top:839px;width:1px;height:27px;background:#d2d2d2;"></div>
<div style="left:79px;top:841px;width:23px;height:23px;background:#cccccc;border:2px solid #8f8f8f;box-shadow:1px 1px 0 #fff;"></div>
<svg style="left:83px;top:846px" width="16" height="14" viewBox="0 0 16 14"><path d="M7.6 1.7V12.4M7.6 1.7C6.3 0.7 3 0.5 0.7 1V11.8C3 11.3 6.3 11.5 7.6 12.5C8.9 11.5 12.2 11.3 14.5 11.8V1C12.2 0.5 8.9 0.7 7.6 1.7Z" stroke="#0054a6" fill="none" stroke-width="1.4" stroke-linejoin="round"/></svg>
<svg style="left:108px;top:846px" width="14" height="14" viewBox="0 0 14 14"><path d="M0.7 3.6L2.4 0.7H10.4L12.1 3.6M0.7 3.6H12.1V12.3H0.7ZM4.6 6.1H8.2" stroke="#0054a6" fill="none" stroke-width="1.4"/></svg>
<svg style="left:132px;top:845px" width="17" height="18" viewBox="0 0 17 18"><path d="M0.8 0.9H12.2L7.6 7.2V14.6L5.4 12.8V7.2Z" stroke="#0054a6" fill="none" stroke-width="1.4" stroke-linejoin="round"/><path d="M10.8 14.6H16.4L13.6 17.4Z" fill="#0054a6"/></svg>
<div style="left:151px;top:842px;width:1px;height:21px;background:#d0d0d0;"></div>
<svg style="left:156.5px;top:845px" width="16" height="15" viewBox="0 0 16 15"><path d="M8 7.4V0.6M8 2.9L6.3 1.2M8 2.9L9.7 1.2" stroke="#0054a6" fill="none" stroke-width="1.15" transform="rotate(0 8 7.4)"/><path d="M8 7.4V0.6M8 2.9L6.3 1.2M8 2.9L9.7 1.2" stroke="#0054a6" fill="none" stroke-width="1.15" transform="rotate(60 8 7.4)"/><path d="M8 7.4V0.6M8 2.9L6.3 1.2M8 2.9L9.7 1.2" stroke="#0054a6" fill="none" stroke-width="1.15" transform="rotate(120 8 7.4)"/><path d="M8 7.4V0.6M8 2.9L6.3 1.2M8 2.9L9.7 1.2" stroke="#0054a6" fill="none" stroke-width="1.15" transform="rotate(180 8 7.4)"/><path d="M8 7.4V0.6M8 2.9L6.3 1.2M8 2.9L9.7 1.2" stroke="#0054a6" fill="none" stroke-width="1.15" transform="rotate(240 8 7.4)"/><path d="M8 7.4V0.6M8 2.9L6.3 1.2M8 2.9L9.7 1.2" stroke="#0054a6" fill="none" stroke-width="1.15" transform="rotate(300 8 7.4)"/></svg>
<div style="top:845px;font-size:12px;line-height:16px;color:#0054a6;left:181px;">0</div>
<div style="left:194px;top:842px;width:1px;height:21px;background:#d0d0d0;"></div>
<div style="top:845px;font-size:12px;line-height:16px;color:#0054a6;letter-spacing:-0.3px;left:201px;">Počet záznamů</div>
<div style="left:288px;top:842px;width:1px;height:21px;background:#d0d0d0;"></div>
<div style="left:827px;top:842px;width:1px;height:21px;background:#d0d0d0;"></div>
<div style="left:853px;top:842px;width:1px;height:21px;background:#d0d0d0;"></div>
<div style="top:842px;font-size:18px;line-height:22px;color:#0054a6;left:834px;transform:scaleX(1.12);transform-origin:left;">Σ</div>
<svg style="left:859px;top:845px" width="17" height="17" viewBox="0 0 17 17"><path d="M1.4 13.6L2.8 9.6L11 1.4A1.5 1.5 0 0 1 13.1 1.4L13.6 1.9A1.5 1.5 0 0 1 13.6 4L5.4 12.2ZM2.8 9.6L5.4 12.2M9.8 2.6L12.4 5.2" stroke="#0054a6" fill="none" stroke-width="1.1" stroke-linejoin="round"/><path d="M7.4 13.6H15" stroke="#0054a6" fill="none" stroke-width="1.2"/></svg>
<!-- rpanel -->
<div style="left:890px;top:34px;width:7px;height:839px;background:#00adef;"></div>
<div style="left:900px;top:34px;width:218px;height:839px;background:#0054a6;"></div>
<div style="left:893px;top:442px;width:2px;height:2px;background:#55ccfa;"></div>
<div style="left:893px;top:451px;width:2px;height:2px;background:#55ccfa;"></div>
<div style="left:893px;top:460px;width:2px;height:2px;background:#55ccfa;"></div>
<div style="top:45px;font-size:20px;line-height:24px;color:#fff;letter-spacing:-0.42px;left:905px;">Zakázka Nepovole...</div>
<svg style="left:1096px;top:48px" width="14" height="14" viewBox="0 0 14 14"><path d="M7.6 3.4H0.8V13.2H10.6V6.4" stroke="#fff" stroke-width="1.5" fill="none"/><path d="M6.2 0.8H13.2V7.8M13 1L5.4 8.6" stroke="#fff" stroke-width="1.5" fill="none"/></svg>
<div style="left:1098px;top:76px;width:17px;height:714px;background:#f0f0f0;"></div>
<div style="left:1099px;top:93px;width:15px;height:570px;background:#cdcdcd;"></div>
<svg style="left:1103px;top:82px" width="8" height="6" viewBox="0 0 8 6"><path d="M3.6 0L7.2 3.6V6.2L3.6 2.6L0 6.2V3.6Z" fill="#4d4d4d"/></svg>
<svg style="left:1103px;top:780px" width="8" height="6" viewBox="0 0 8 6"><path d="M3.6 6.2L7.2 2.6V0L3.6 3.6L0 0V2.6Z" fill="#4d4d4d"/></svg>
<div style="left:903px;top:76px;width:195px;height:25px;background:#00adef;"></div>
<div style="top:81px;font-size:13px;line-height:17px;color:#fff;letter-spacing:0.01px;font-weight:bold;left:907px;">Základní údaje</div>
<div style="left:1073px;top:78px;width:1px;height:21px;background:#0086c9;"></div>
<svg style="left:1078.7px;top:85px" width="14" height="7" viewBox="0 0 14 7"><path d="M0.5 6.5L6.8 0.7L13.1 6.5" stroke="#fff" stroke-width="1.2" fill="none"/></svg>
<div style="left:903px;top:101px;width:195px;height:167px;background:#fdfdfd;"></div>
<div style="top:106px;font-size:13px;line-height:17px;color:#1b3f97;letter-spacing:-0.68px;left:910.4px;">Odběratel:</div>
<div style="top:106px;font-size:13px;line-height:17px;color:#bcbcbc;letter-spacing:-0.57px;left:1026.4px;">Nepovoleno</div>
<div style="left:910px;top:122px;width:181px;height:1px;background:#e2e2e2;"></div>
<div style="top:128px;font-size:13px;line-height:17px;color:#1b3f97;letter-spacing:-1.04px;left:910.4px;">Popis:</div>
<div style="top:128px;font-size:13px;line-height:17px;color:#bcbcbc;letter-spacing:-0.57px;left:1026.4px;">Nepovoleno</div>
<div style="left:910px;top:144px;width:181px;height:1px;background:#e2e2e2;"></div>
<div style="top:150px;font-size:13px;line-height:17px;color:#1b3f97;letter-spacing:-0.55px;left:910.4px;">Netto:</div>
<div style="top:150px;font-size:13px;line-height:17px;color:#bcbcbc;letter-spacing:-0.57px;left:957.5px;">Nepovoleno</div>
<div style="top:150px;font-size:13px;line-height:17px;color:#5aa7f2;letter-spacing:-0.85px;font-style:italic;left:1025.8px;">Nepovoleno</div>
<div style="left:910px;top:166px;width:181px;height:1px;background:#e2e2e2;"></div>
<div style="top:172px;font-size:13px;line-height:17px;color:#1b3f97;letter-spacing:-1.54px;left:910.4px;">DPH:</div>
<div style="top:172px;font-size:13px;line-height:17px;color:#bcbcbc;letter-spacing:-0.57px;left:957.5px;">Nepovoleno</div>
<div style="top:172px;font-size:13px;line-height:17px;color:#5aa7f2;letter-spacing:-0.85px;font-style:italic;left:1025.8px;">Nepovoleno</div>
<div style="left:910px;top:188px;width:181px;height:1px;background:#e2e2e2;"></div>
<div style="top:194px;font-size:13px;line-height:17px;color:#1b3f97;letter-spacing:-0.56px;font-weight:bold;left:910.4px;">Brutto:</div>
<div style="top:194px;font-size:13px;line-height:17px;color:#bcbcbc;letter-spacing:-0.68px;font-weight:bold;left:956.3px;">Nepovole...</div>
<div style="top:194px;font-size:13px;line-height:17px;color:#5aa7f2;letter-spacing:-0.91px;font-weight:bold;font-style:italic;left:1022.8px;">Nepovoleno</div>
<div style="left:910px;top:210px;width:181px;height:1px;background:#e2e2e2;"></div>
<div style="top:216px;font-size:13px;line-height:17px;color:#1b3f97;letter-spacing:-0.58px;left:910.4px;">Datum dodání:</div>
<div style="top:216px;font-size:13px;line-height:17px;color:#bcbcbc;letter-spacing:-0.57px;left:1026.4px;">Nepovoleno</div>
<div style="left:910px;top:232px;width:181px;height:1px;background:#e2e2e2;"></div>
<svg style="left:911.5px;top:240.5px" width="20" height="20" viewBox="0 0 20 20"><circle cx="10" cy="10" r="8.7" stroke="#000" stroke-width="1.5" fill="none"/><path d="M3.9 3.9L16.1 16.1" stroke="#000" stroke-width="1.5"/></svg>
<svg style="left:937.5px;top:240.5px" width="20" height="20" viewBox="0 0 20 20"><circle cx="10" cy="10" r="8.7" stroke="#000" stroke-width="1.5" fill="none"/><path d="M3.9 3.9L16.1 16.1" stroke="#000" stroke-width="1.5"/></svg>
<svg style="left:963.5px;top:240.5px" width="20" height="20" viewBox="0 0 20 20"><circle cx="10" cy="10" r="8.7" stroke="#000" stroke-width="1.5" fill="none"/><path d="M3.9 3.9L16.1 16.1" stroke="#000" stroke-width="1.5"/></svg>
<svg style="left:989.5px;top:240.5px" width="20" height="20" viewBox="0 0 20 20"><circle cx="10" cy="10" r="8.7" stroke="#000" stroke-width="1.5" fill="none"/><path d="M3.9 3.9L16.1 16.1" stroke="#000" stroke-width="1.5"/></svg>
<svg style="left:1015.5px;top:240.5px" width="20" height="20" viewBox="0 0 20 20"><circle cx="10" cy="10" r="8.7" stroke="#000" stroke-width="1.5" fill="none"/><path d="M3.9 3.9L16.1 16.1" stroke="#000" stroke-width="1.5"/></svg>
<svg style="left:1041.5px;top:240.5px" width="20" height="20" viewBox="0 0 20 20"><circle cx="10" cy="10" r="8.7" stroke="#000" stroke-width="1.5" fill="none"/><path d="M3.9 3.9L16.1 16.1" stroke="#000" stroke-width="1.5"/></svg>
<svg style="left:1069.5px;top:240.5px" width="20" height="20" viewBox="0 0 20 20"><circle cx="10" cy="10" r="8.7" stroke="#000" stroke-width="1.5" fill="none"/><path d="M3.9 3.9L16.1 16.1" stroke="#000" stroke-width="1.5"/></svg>
<div style="left:903px;top:275px;width:195px;height:25px;background:#00adef;"></div>
<div style="top:280px;font-size:13px;line-height:17px;color:#fff;letter-spacing:-0.19px;font-weight:bold;left:907px;">Zálohy k zakázce</div>
<div style="left:1073px;top:277px;width:1px;height:21px;background:#0086c9;"></div>
<svg style="left:1078.7px;top:284px" width="14" height="7" viewBox="0 0 14 7"><path d="M0.5 6.5L6.8 0.7L13.1 6.5" stroke="#fff" stroke-width="1.2" fill="none"/></svg>
<svg style="left:1032px;top:280px" width="17" height="18" viewBox="0 0 17 18"><path d="M8.6 14.4H0.6V0.6H7.6L11.4 4.4V7.4M7.6 0.6V4.4H11.4" stroke="#fff" fill="none" stroke-width="1.1"/><rect x="8.4" y="7.4" width="7" height="9.2" fill="#00adef" stroke="#fff" stroke-width="1.1"/><path d="M10.1 10.0h3.6" stroke="#bfeafb" stroke-width="1.6"/><path d="M10.1 12.600000000000001h1.3M12.4 12.600000000000001h1.3M10.1 14.600000000000001h1.3M12.4 14.600000000000001h1.3" stroke="#d9f3fd" stroke-width="1.2"/></svg>
<svg style="left:1055px;top:280px" width="17" height="18" viewBox="0 0 17 18"><path d="M8.6 14.4H0.6V0.6H7.6L11.4 4.4V7.4M7.6 0.6V4.4H11.4M2.6 7.2H6.4M2.6 9.4H6.4M2.6 11.6H6.4" stroke="#fff" fill="none" stroke-width="1.1"/><rect x="8.4" y="7.4" width="7" height="9.2" fill="#00adef" stroke="#fff" stroke-width="1.1"/><path d="M10.1 10.0h3.6" stroke="#bfeafb" stroke-width="1.6"/><path d="M10.1 12.600000000000001h1.3M12.4 12.600000000000001h1.3M10.1 14.600000000000001h1.3M12.4 14.600000000000001h1.3" stroke="#d9f3fd" stroke-width="1.2"/></svg>
<div style="left:903px;top:300px;width:195px;height:80px;background:#fdfdfd;"></div>
<div style="top:305px;font-size:13px;line-height:17px;color:#1b3f97;letter-spacing:-0.89px;left:910.4px;">Čerpáno:</div>
<div style="top:305px;font-size:13px;line-height:17px;color:#bcbcbc;letter-spacing:-0.63px;left:962.3px;">Nepovole...</div>
<div style="top:305px;font-size:13px;line-height:17px;color:#5aa7f2;letter-spacing:-0.85px;font-style:italic;left:1025.8px;">Nepovoleno</div>
<div style="left:910px;top:321px;width:181px;height:1px;background:#e2e2e2;"></div>
<div style="top:327px;font-size:13px;line-height:17px;color:#1b3f97;letter-spacing:-0.7px;font-weight:bold;left:910.4px;">Dočerpat:</div>
<div style="top:327px;font-size:13px;line-height:17px;color:#bcbcbc;letter-spacing:-0.74px;font-weight:bold;left:974.5px;">Nepov...</div>
<div style="top:327px;font-size:13px;line-height:17px;color:#5aa7f2;letter-spacing:-0.91px;font-weight:bold;font-style:italic;left:1022.8px;">Nepovoleno</div>
<div style="left:910px;top:343px;width:181px;height:1px;background:#e2e2e2;"></div>
<svg style="left:911.5px;top:351.5px" width="20" height="20" viewBox="0 0 20 20"><circle cx="10" cy="10" r="8.7" stroke="#000" stroke-width="1.5" fill="none"/><path d="M3.9 3.9L16.1 16.1" stroke="#000" stroke-width="1.5"/></svg>
<svg style="left:937.7px;top:351.5px" width="20" height="20" viewBox="0 0 20 20"><circle cx="10" cy="10" r="8.7" stroke="#000" stroke-width="1.5" fill="none"/><path d="M3.9 3.9L16.1 16.1" stroke="#000" stroke-width="1.5"/></svg>
<div style="left:903px;top:386px;width:195px;height:25px;background:#00adef;"></div>
<div style="top:391px;font-size:13px;line-height:17px;color:#fff;letter-spacing:0.05px;font-weight:bold;left:907px;">Zálohy k odběrateli</div>
<div style="left:1073px;top:388px;width:1px;height:21px;background:#0086c9;"></div>
<svg style="left:1078.7px;top:395px" width="14" height="7" viewBox="0 0 14 7"><path d="M0.5 6.5L6.8 0.7L13.1 6.5" stroke="#fff" stroke-width="1.2" fill="none"/></svg>
<svg style="left:1053px;top:391px" width="19" height="18" viewBox="0 0 19 18"><circle cx="6.6" cy="4.4" r="3.6" stroke="#fff" fill="none" stroke-width="1.1"/><path d="M0.6 13.6C1.4 9.8 3.8 8.2 6.6 8.2C8 8.2 9.2 8.6 10.2 9.4" stroke="#fff" fill="none" stroke-width="1.1"/><rect x="10.8" y="7.6" width="7" height="9.2" fill="#00adef" stroke="#fff" stroke-width="1.1"/><path d="M12.5 10.2h3.6" stroke="#bfeafb" stroke-width="1.6"/><path d="M12.5 12.8h1.3M14.8 12.8h1.3M12.5 14.8h1.3M14.8 14.8h1.3" stroke="#d9f3fd" stroke-width="1.2"/></svg>
<div style="left:903px;top:411px;width:195px;height:80px;background:#fdfdfd;"></div>
<div style="top:416px;font-size:13px;line-height:17px;color:#1b3f97;letter-spacing:-0.89px;left:910.4px;">Čerpáno:</div>
<div style="top:416px;font-size:13px;line-height:17px;color:#bcbcbc;letter-spacing:-0.63px;left:962.3px;">Nepovole...</div>
<div style="top:416px;font-size:13px;line-height:17px;color:#5aa7f2;letter-spacing:-0.85px;font-style:italic;left:1025.8px;">Nepovoleno</div>
<div style="left:910px;top:432px;width:181px;height:1px;background:#e2e2e2;"></div>
<div style="top:438px;font-size:13px;line-height:17px;color:#1b3f97;letter-spacing:-0.7px;font-weight:bold;left:910.4px;">Dočerpat:</div>
<div style="top:438px;font-size:13px;line-height:17px;color:#bcbcbc;letter-spacing:-0.74px;font-weight:bold;left:974.5px;">Nepov...</div>
<div style="top:438px;font-size:13px;line-height:17px;color:#5aa7f2;letter-spacing:-0.91px;font-weight:bold;font-style:italic;left:1022.8px;">Nepovoleno</div>
<div style="left:910px;top:454px;width:181px;height:1px;background:#e2e2e2;"></div>
<svg style="left:911.5px;top:462.5px" width="20" height="20" viewBox="0 0 20 20"><circle cx="10" cy="10" r="8.7" stroke="#000" stroke-width="1.5" fill="none"/><path d="M3.9 3.9L16.1 16.1" stroke="#000" stroke-width="1.5"/></svg>
<svg style="left:937.7px;top:462.5px" width="20" height="20" viewBox="0 0 20 20"><circle cx="10" cy="10" r="8.7" stroke="#000" stroke-width="1.5" fill="none"/><path d="M3.9 3.9L16.1 16.1" stroke="#000" stroke-width="1.5"/></svg>
<div style="left:903px;top:497px;width:195px;height:25px;background:#00adef;"></div>
<div style="top:502px;font-size:13px;line-height:17px;color:#fff;letter-spacing:-0.02px;font-weight:bold;left:907px;">Obchodní informace</div>
<div style="left:1073px;top:499px;width:1px;height:21px;background:#0086c9;"></div>
<svg style="left:1078.7px;top:506px" width="14" height="7" viewBox="0 0 14 7"><path d="M0.5 6.5L6.8 0.7L13.1 6.5" stroke="#fff" stroke-width="1.2" fill="none"/></svg>
<div style="left:903px;top:522px;width:195px;height:237px;background:#fdfdfd;"></div>
<div style="top:532px;font-size:13px;line-height:17px;color:#1b3f97;letter-spacing:-0.24px;font-weight:bold;left:914.4px;">Plán</div>
<div style="left:910px;top:551px;width:181px;height:2px;background:#00adef;"></div>
<div style="top:558.5px;font-size:12px;line-height:16px;color:#1b3f97;letter-spacing:-0.47px;left:910.4px;">Zisk:</div>
<div style="top:557.5px;font-size:13px;line-height:17px;color:#bcbcbc;letter-spacing:-0.57px;left:957.5px;">Nepovoleno</div>
<div style="top:557.5px;font-size:13px;line-height:17px;color:#5aa7f2;letter-spacing:-0.85px;font-style:italic;left:1025.8px;">Nepovoleno</div>
<div style="top:579.5px;font-size:12px;line-height:16px;color:#1b3f97;letter-spacing:-0.53px;left:910.4px;">Přirážka:</div>
<div style="top:578.5px;font-size:13px;line-height:17px;color:#bcbcbc;letter-spacing:-0.62px;left:998.6px;">Nepovoleno</div>
<div style="top:578.5px;font-size:13px;line-height:17px;color:#1b3f97;letter-spacing:-0.27px;left:1067px;">['%']</div>
<div style="top:600.5px;font-size:12px;line-height:16px;color:#1b3f97;letter-spacing:-0.55px;left:910.4px;">Marže:</div>
<div style="top:599.5px;font-size:13px;line-height:17px;color:#bcbcbc;letter-spacing:-0.57px;left:1026.4px;">Nepovoleno</div>
<div style="top:622.0px;font-size:12px;line-height:16px;color:#1b3f97;letter-spacing:-0.4px;left:910.4px;">Skladová cena:</div>
<div style="top:621.0px;font-size:13px;line-height:17px;color:#bcbcbc;letter-spacing:-0.88px;left:992px;">Nep...</div>
<div style="top:621.0px;font-size:13px;line-height:17px;color:#5aa7f2;letter-spacing:-0.85px;font-style:italic;left:1025.8px;">Nepovoleno</div>
<div style="top:646.6px;font-size:13px;line-height:17px;color:#1b3f97;letter-spacing:-0.48px;font-weight:bold;left:914.4px;">Skutečnost</div>
<div style="left:910px;top:666px;width:181px;height:2px;background:#00adef;"></div>
<div style="top:673.4px;font-size:12px;line-height:16px;color:#1b3f97;letter-spacing:-0.47px;left:910.4px;">Zisk:</div>
<div style="top:672.4px;font-size:13px;line-height:17px;color:#bcbcbc;letter-spacing:-0.57px;left:957.5px;">Nepovoleno</div>
<div style="top:672.4px;font-size:13px;line-height:17px;color:#5aa7f2;letter-spacing:-0.85px;font-style:italic;left:1025.8px;">Nepovoleno</div>
<div style="top:694.4px;font-size:12px;line-height:16px;color:#1b3f97;letter-spacing:-0.53px;left:910.4px;">Přirážka:</div>
<div style="top:693.4px;font-size:13px;line-height:17px;color:#bcbcbc;letter-spacing:-0.57px;left:1026.4px;">Nepovoleno</div>
<div style="top:715.4px;font-size:12px;line-height:16px;color:#1b3f97;letter-spacing:-0.55px;left:910.4px;">Marže:</div>
<div style="top:714.4px;font-size:13px;line-height:17px;color:#bcbcbc;letter-spacing:-0.57px;left:1026.4px;">Nepovoleno</div>
<div style="top:736.9px;font-size:12px;line-height:16px;color:#1b3f97;letter-spacing:-0.4px;left:910.4px;">Skladová cena:</div>
<div style="top:735.9px;font-size:13px;line-height:17px;color:#bcbcbc;letter-spacing:-0.88px;left:992px;">Nep...</div>
<div style="top:735.9px;font-size:13px;line-height:17px;color:#5aa7f2;letter-spacing:-0.85px;font-style:italic;left:1025.8px;">Nepovoleno</div>
<div style="left:903px;top:765px;width:195px;height:25px;background:#00adef;"></div>
<div style="top:770px;font-size:13px;line-height:17px;color:#fff;letter-spacing:0.03px;font-weight:bold;left:907px;">Ostatní údaje</div>
<div style="left:1073px;top:767px;width:1px;height:21px;background:#0086c9;"></div>
<svg style="left:1078.7px;top:774px" width="14" height="7" viewBox="0 0 14 7"><path d="M0.5 6.5L6.8 0.7L13.1 6.5" stroke="#fff" stroke-width="1.2" fill="none"/></svg>
<div style="left:903px;top:794px;width:212px;height:25px;background:#00adef;"></div>
<div style="top:799px;font-size:13px;line-height:17px;color:#fff;letter-spacing:-0.1px;font-weight:bold;left:907px;">Nastavení</div>
<div style="left:1091px;top:796px;width:1px;height:21px;background:#0086c9;"></div>
<svg style="left:1095.8px;top:803px" width="14" height="7" viewBox="0 0 14 7"><path d="M0.5 6.5L6.8 0.7L13.1 6.5" stroke="#fff" stroke-width="1.2" fill="none"/></svg>
<div style="left:903px;top:819px;width:212px;height:50px;background:#fdfdfd;"></div>
<div style="top:824px;font-size:13px;line-height:17px;color:#1b3f97;letter-spacing:-0.48px;left:917.4px;">Období</div>
<div style="top:824px;font-size:13px;line-height:17px;color:#1b3f97;letter-spacing:-1.15px;left:1020.4px;">Sklad</div>
<div style="left:910px;top:840px;width:97px;height:23px;background:#ffffe4;border:1px solid #00adef;"></div>
<div style="top:844px;font-size:13px;line-height:17px;color:#8c8478;letter-spacing:-0.43px;font-style:italic;left:913.6px;">Nepovoleno</div>
<svg style="left:989.8px;top:847px" width="12" height="10" viewBox="0 0 12 10"><rect x="0.5" y="0.5" width="2" height="2" fill="none" stroke="#1c4aa0" stroke-width="0.9"/><rect x="4.6" y="0.5" width="2" height="2" fill="none" stroke="#1c4aa0" stroke-width="0.9"/><rect x="8.7" y="0.5" width="2" height="2" fill="none" stroke="#1c4aa0" stroke-width="0.9"/><path d="M0.4 4.4L5.6 9L10.8 4.4" stroke="#1c4aa0" stroke-width="1.1" fill="none"/></svg>
<div style="left:1013px;top:840px;width:95px;height:23px;background:#ffffe4;border:1px solid #00adef;"></div>
<div style="top:844px;font-size:13px;line-height:17px;color:#8c8478;letter-spacing:-0.43px;font-style:italic;left:1016.6px;">Nepovoleno</div>
<svg style="left:1090.8px;top:847px" width="12" height="10" viewBox="0 0 12 10"><rect x="0.5" y="0.5" width="2" height="2" fill="none" stroke="#1c4aa0" stroke-width="0.9"/><rect x="4.6" y="0.5" width="2" height="2" fill="none" stroke="#1c4aa0" stroke-width="0.9"/><rect x="8.7" y="0.5" width="2" height="2" fill="none" stroke="#1c4aa0" stroke-width="0.9"/><path d="M0.4 4.4L5.6 9L10.8 4.4" stroke="#1c4aa0" stroke-width="1.1" fill="none"/></svg>
</div></body></html>
